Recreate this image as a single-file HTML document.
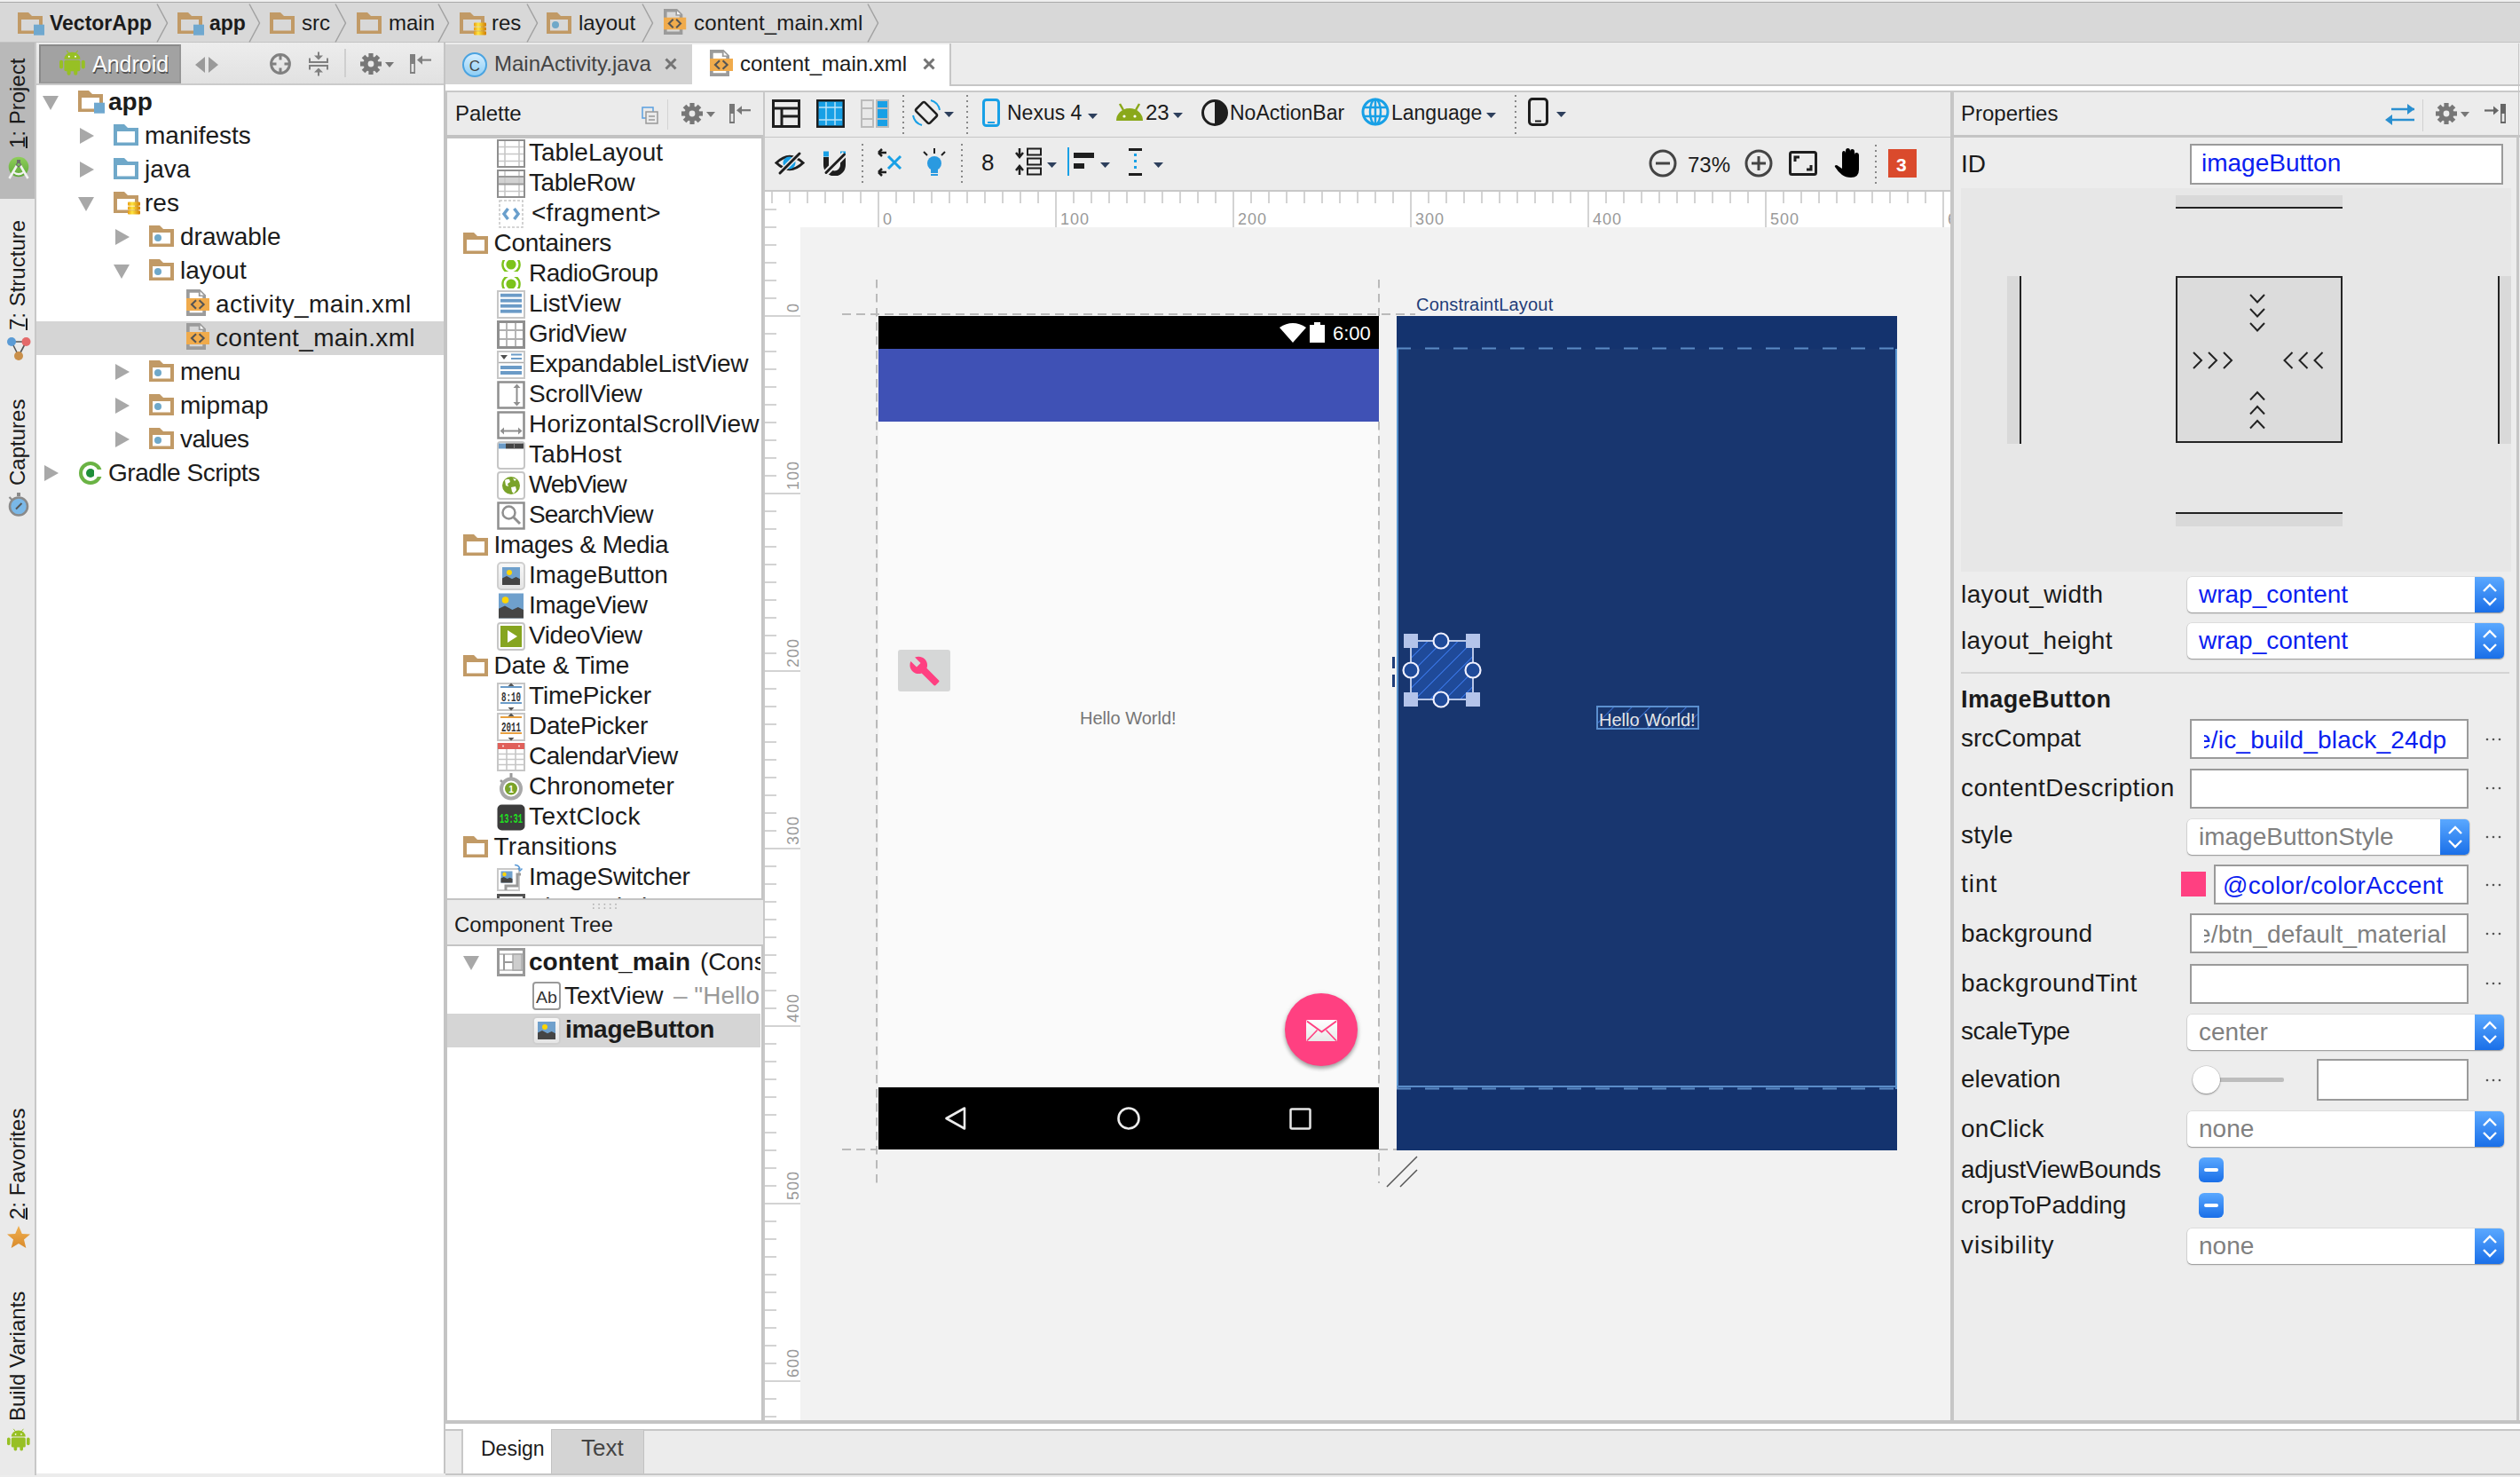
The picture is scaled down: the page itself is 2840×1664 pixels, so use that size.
<!DOCTYPE html>
<html><head><meta charset="utf-8"><title>Android Studio</title><style>
*{margin:0;padding:0;box-sizing:border-box}
html,body{width:2840px;height:1664px;overflow:hidden}
body{position:relative;background:#ececec;font-family:"Liberation Sans",sans-serif;color:#1b1b1b}
.a{position:absolute}
.t{position:absolute;white-space:nowrap;line-height:1}
.clip{position:absolute;overflow:hidden}
</style></head><body>

<div class="a" style="left:0px;top:0px;width:2840px;height:2px;background:#efefef;"></div>
<div class="a" style="left:0px;top:2px;width:2840px;height:1px;background:#a9a9a9;"></div>
<div class="a" style="left:0px;top:3px;width:2840px;height:44px;background:#d8d8d8;"></div>
<div class="a" style="left:0px;top:47px;width:2840px;height:2px;background:#c3c3c3;"></div>
<svg class="a" style="left:20px;top:14px;" width="30" height="26" viewBox="0 0 30 26"><path fill-rule="evenodd" d="M0 0 H12 L16 4 H28 V24 H0 Z M4 8 V20.4 H24 V8 Z" fill="#c19a66"/><rect x="18" y="13.7" width="12" height="12" fill="#6fa8cf"/></svg>
<div class="t" style="left:56px;top:14.5px;font-size:23px;color:#1b1b1b;font-weight:bold;">VectorApp</div>
<svg class="a" style="left:176px;top:4px;" width="15" height="44" viewBox="0 0 15 44"><path d="M1 0.5 L12.5 22 L1 43.5" fill="none" stroke="#a2a2a2" stroke-width="1.5"/></svg>
<svg class="a" style="left:200px;top:14px;" width="30" height="26" viewBox="0 0 30 26"><path fill-rule="evenodd" d="M0 0 H12 L16 4 H28 V24 H0 Z M4 8 V20.4 H24 V8 Z" fill="#c19a66"/><rect x="18" y="13.7" width="12" height="12" fill="#6fa8cf"/></svg>
<div class="t" style="left:236px;top:14.5px;font-size:23px;color:#1b1b1b;font-weight:bold;">app</div>
<svg class="a" style="left:280px;top:4px;" width="15" height="44" viewBox="0 0 15 44"><path d="M1 0.5 L12.5 22 L1 43.5" fill="none" stroke="#a2a2a2" stroke-width="1.5"/></svg>
<svg class="a" style="left:304px;top:14px;" width="30" height="26" viewBox="0 0 30 26"><path fill-rule="evenodd" d="M0 0 H12 L16 4 H28 V24 H0 Z M4 8 V20.4 H24 V8 Z" fill="#c19a66"/></svg>
<div class="t" style="left:340px;top:13.7px;font-size:24px;color:#1b1b1b;">src</div>
<svg class="a" style="left:377px;top:4px;" width="15" height="44" viewBox="0 0 15 44"><path d="M1 0.5 L12.5 22 L1 43.5" fill="none" stroke="#a2a2a2" stroke-width="1.5"/></svg>
<svg class="a" style="left:402px;top:14px;" width="30" height="26" viewBox="0 0 30 26"><path fill-rule="evenodd" d="M0 0 H12 L16 4 H28 V24 H0 Z M4 8 V20.4 H24 V8 Z" fill="#c19a66"/></svg>
<div class="t" style="left:438px;top:13.7px;font-size:24px;color:#1b1b1b;">main</div>
<svg class="a" style="left:493px;top:4px;" width="15" height="44" viewBox="0 0 15 44"><path d="M1 0.5 L12.5 22 L1 43.5" fill="none" stroke="#a2a2a2" stroke-width="1.5"/></svg>
<svg class="a" style="left:518px;top:14px;" width="30" height="26" viewBox="0 0 30 26"><path fill-rule="evenodd" d="M0 0 H12 L16 4 H28 V24 H0 Z M4 8 V20.4 H24 V8 Z" fill="#c19a66"/><defs><linearGradient id="coin" x1="0" x2="1"><stop offset="0" stop-color="#e89a10"/><stop offset="0.35" stop-color="#ffe640"/><stop offset="1" stop-color="#d07a00"/></linearGradient></defs><g fill="url(#coin)"><rect x="16" y="11.6" width="14" height="4.2" rx="1"/><rect x="16" y="16.4" width="14" height="4.2" rx="1"/><rect x="16" y="21.2" width="14" height="4.3" rx="1"/></g></svg>
<div class="t" style="left:554px;top:13.7px;font-size:24px;color:#1b1b1b;">res</div>
<svg class="a" style="left:593px;top:4px;" width="15" height="44" viewBox="0 0 15 44"><path d="M1 0.5 L12.5 22 L1 43.5" fill="none" stroke="#a2a2a2" stroke-width="1.5"/></svg>
<svg class="a" style="left:616px;top:14px;" width="30" height="26" viewBox="0 0 30 26"><path fill-rule="evenodd" d="M0 0 H12 L16 4 H28 V24 H0 Z M4 8 V20.4 H24 V8 Z" fill="#c19a66"/><circle cx="10" cy="14" r="4" fill="#6fa8c9"/></svg>
<div class="t" style="left:652px;top:13.7px;font-size:24px;color:#1b1b1b;">layout</div>
<svg class="a" style="left:723px;top:4px;" width="15" height="44" viewBox="0 0 15 44"><path d="M1 0.5 L12.5 22 L1 43.5" fill="none" stroke="#a2a2a2" stroke-width="1.5"/></svg>
<svg class="a" style="left:748px;top:10px;" width="27" height="31" viewBox="0 0 27 31"><g transform="scale(0.97)"><path fill-rule="evenodd" d="M0 0 H15.5 L22 6.5 V30 H0 Z M3.7 3.7 V26.3 H18.3 V8 H13.8 V3.7 Z" fill="#9b9b9b"/><path d="M15.6 2.6 L19.6 6.4 H15.6 Z" fill="#fff"/><rect x="0" y="10" width="26" height="14" fill="#f0ab4c"/><path d="M11 12.2 L6 17 L11 21.8 M14.6 12.2 L19.6 17 L14.6 21.8" fill="none" stroke="#555" stroke-width="2.1"/></g></svg>
<div class="t" style="left:782px;top:13.7px;font-size:24px;color:#1b1b1b;letter-spacing:0.15px;">content_main.xml</div>
<svg class="a" style="left:977px;top:4px;" width="15" height="44" viewBox="0 0 15 44"><path d="M1 0.5 L12.5 22 L1 43.5" fill="none" stroke="#a2a2a2" stroke-width="1.5"/></svg>
<div class="a" style="left:0px;top:48px;width:40px;height:1616px;background:#eaeaea;"></div>
<div class="a" style="left:39px;top:48px;width:2px;height:1616px;background:#c8c8c8;"></div>
<div class="a" style="left:0px;top:48px;width:39px;height:176px;background:#b9b9b9;"></div>
<div class="t" style="left:20px;top:167px;font-size:24px;color:#1b1b1b;transform-origin:0 0;transform:rotate(-90deg) translate(0,-0.5em);"><span style="text-decoration:underline;text-underline-offset:1px">1</span>: Project</div>
<div class="t" style="left:20px;top:372px;font-size:24px;color:#1b1b1b;transform-origin:0 0;transform:rotate(-90deg) translate(0,-0.5em);"><span style="text-decoration:underline;text-underline-offset:1px">7</span>: Structure</div>
<div class="t" style="left:20px;top:547px;font-size:24px;color:#1b1b1b;transform-origin:0 0;transform:rotate(-90deg) translate(0,-0.5em);">Captures</div>
<div class="t" style="left:20px;top:1374px;font-size:24px;color:#1b1b1b;transform-origin:0 0;transform:rotate(-90deg) translate(0,-0.5em);"><span style="text-decoration:underline;text-underline-offset:1px">2</span>: Favorites</div>
<div class="t" style="left:20px;top:1601px;font-size:24px;color:#1b1b1b;transform-origin:0 0;transform:rotate(-90deg) translate(0,-0.5em);">Build Variants</div>
<svg class="a" style="left:9px;top:176px;" width="26" height="26" viewBox="0 0 26 26"><defs><linearGradient id="asg" x1="0" y1="0" x2="0" y2="1"><stop offset="0" stop-color="#8fcf5a"/><stop offset="1" stop-color="#5fa83a"/></linearGradient></defs><circle cx="12" cy="12" r="11.3" fill="url(#asg)"/><path d="M1.5 25 L10 10.5 M22.5 25 L14 10.5" stroke="#f2f2f2" stroke-width="2.6"/><path d="M5.5 17.5 Q12 23 18.5 17.5" stroke="#f2f2f2" stroke-width="2.2" fill="none"/><path d="M10 4 H14 V7.5 L15.5 9.5 L12 13 L8.5 9.5 L10 7.5 Z" fill="#6d6d6d"/><circle cx="12" cy="9.3" r="1.6" fill="#78c257"/></svg>
<svg class="a" style="left:6px;top:378px;" width="30" height="30" viewBox="0 0 30 30"><path d="M7 7 H23.5 M7 7 L15 23 M23.5 7 L15 23" stroke="#555" stroke-width="1.6" fill="none"/><circle cx="7" cy="7" r="5" fill="#5b9bd5"/><circle cx="23.5" cy="7" r="5" fill="#e46a6a"/><circle cx="15" cy="23" r="5" fill="#c98f4a"/></svg>
<svg class="a" style="left:8px;top:555px;" width="26" height="28" viewBox="0 0 26 28"><rect x="11" y="0" width="4" height="4" fill="#8a8a8a"/><path d="M2.5 5 L6 8.5" stroke="#8a8a8a" stroke-width="2.2"/><circle cx="13" cy="15.5" r="10" fill="#7ab8e8" stroke="#8a8a8a" stroke-width="2.6"/><path d="M10 18.5 L16.5 12" stroke="#555" stroke-width="2"/></svg>
<svg class="a" style="left:7px;top:1380px;" width="28" height="28" viewBox="0 0 28 28"><defs><linearGradient id="stg" x1="0" y1="0" x2="0" y2="1"><stop offset="0" stop-color="#f0b050"/><stop offset="1" stop-color="#d98a2a"/></linearGradient></defs><path d="M14 1 L17.8 10 L27 10.5 L20 16.6 L22.3 26 L14 21 L5.7 26 L8 16.6 L1 10.5 L10.2 10 Z" fill="url(#stg)"/></svg>
<svg class="a" style="left:8px;top:1609px;" width="26" height="27" viewBox="0 0 26 27"><g transform="scale(0.8)" fill="#97c024"><path d="M6 12 a10 9 0 0 1 20 0 z"/><rect x="6" y="13" width="20" height="14" rx="2"/><rect x="0" y="13" width="4.5" height="11" rx="2.2"/><rect x="27.5" y="13" width="4.5" height="11" rx="2.2"/><rect x="9.5" y="24" width="4.5" height="8" rx="2.2"/><rect x="18" y="24" width="4.5" height="8" rx="2.2"/><path d="M9 1 l3 4 M23 1 l-3 4" stroke="#97c024" stroke-width="1.2"/></g><g transform="scale(0.8)" fill="#fff"><circle cx="12" cy="8.5" r="1.1"/><circle cx="20" cy="8.5" r="1.1"/></g></svg>
<div class="a" style="left:41px;top:48px;width:460px;height:1612px;background:#ffffff;"></div>
<div class="a" style="left:41px;top:48px;width:460px;height:47px;background:linear-gradient(#ededed,#e1e1e1);"></div>
<div class="a" style="left:41px;top:94px;width:460px;height:2px;background:#cbcbcb;"></div>
<div class="a" style="left:500px;top:48px;width:2px;height:1612px;background:#c4c4c4;"></div>
<div class="a" style="left:44px;top:50px;width:160px;height:44px;background:#a2a2a2;border:2px solid #8a8a8a;border-bottom-color:#9a9a9a;border-right-color:#959595;"></div>
<svg class="a" style="left:67px;top:56px;" width="29" height="30" viewBox="0 0 29 30"><g transform="scale(0.9)" fill="#97c024"><path d="M6 12 a10 9 0 0 1 20 0 z"/><rect x="6" y="13" width="20" height="14" rx="2"/><rect x="0" y="13" width="4.5" height="11" rx="2.2"/><rect x="27.5" y="13" width="4.5" height="11" rx="2.2"/><rect x="9.5" y="24" width="4.5" height="8" rx="2.2"/><rect x="18" y="24" width="4.5" height="8" rx="2.2"/><path d="M9 1 l3 4 M23 1 l-3 4" stroke="#97c024" stroke-width="1.2"/></g><g transform="scale(0.9)" fill="#fff"><circle cx="12" cy="8.5" r="1.1"/><circle cx="20" cy="8.5" r="1.1"/></g></svg>
<div class="t" style="left:104px;top:59.8px;font-size:25px;color:#ffffff;text-shadow:1px 1.5px 0.5px #505050;">Android</div>
<svg class="a" style="left:220px;top:64px;" width="26" height="20" viewBox="0 0 26 20"><path d="M11 0 V18 L0 9 Z M15 0 V18 L26 9 Z" fill="#9a9a9a"/></svg>
<svg class="a" style="left:302px;top:58px;" width="28" height="28" viewBox="0 0 28 28"><circle cx="14" cy="14" r="10.4" fill="none" stroke="#808080" stroke-width="3"/><path d="M14 3 V9.5 M14 18.5 V25 M3 14 H9.5 M18.5 14 H25" stroke="#808080" stroke-width="3"/></svg>
<svg class="a" style="left:347px;top:58px;" width="24" height="28" viewBox="0 0 24 28"><g fill="#808080"><rect x="1" y="11" width="22" height="2"/><rect x="1" y="15" width="22" height="2"/><rect x="1" y="7.5" width="2" height="5.5"/><rect x="21" y="7.5" width="2" height="5.5"/><rect x="1" y="15" width="2" height="5.5"/><rect x="21" y="15" width="2" height="5.5"/><rect x="11" y="0.5" width="2" height="5"/><path d="M7 4.5 H17 L12 9.5 Z"/><rect x="11" y="22.5" width="2" height="5"/><path d="M7 23.5 H17 L12 18.5 Z"/></g></svg>
<div class="a" style="left:388px;top:55px;width:2px;height:32px;background:#cfcfcf;"></div>
<svg class="a" style="left:405px;top:59px;" width="40" height="26" viewBox="0 0 40 26"><g transform="translate(13 13)" fill="#777777"><rect x="-2.6" y="-12" width="5.2" height="6" transform="rotate(0)"/><rect x="-2.6" y="-12" width="5.2" height="6" transform="rotate(45)"/><rect x="-2.6" y="-12" width="5.2" height="6" transform="rotate(90)"/><rect x="-2.6" y="-12" width="5.2" height="6" transform="rotate(135)"/><rect x="-2.6" y="-12" width="5.2" height="6" transform="rotate(180)"/><rect x="-2.6" y="-12" width="5.2" height="6" transform="rotate(225)"/><rect x="-2.6" y="-12" width="5.2" height="6" transform="rotate(270)"/><rect x="-2.6" y="-12" width="5.2" height="6" transform="rotate(315)"/><circle r="8.6"/><circle r="3.4" fill="#e9e9e9"/></g><path d="M29 11 H39 L34 17 Z" fill="#777777"/></svg>
<svg class="a" style="left:461px;top:60px;" width="28" height="24" viewBox="0 0 28 24"><rect x="1" y="1" width="6" height="22" fill="#808080"/><rect x="2.6" y="12" width="2.8" height="9" fill="#e6e6e6"/><path d="M15 7.6 H25" stroke="#808080" stroke-width="2.2"/><path d="M9 7.6 L15 2.5 V12.7 Z" fill="#808080"/></svg>
<div class="a" style="left:41px;top:362px;width:459px;height:38px;background:#d5d5d5;"></div>
<svg class="a" style="left:48px;top:108.0px;" width="18" height="16" viewBox="0 0 18 16"><path d="M0 0 H18 L9 16 z" fill="#a8a8a8"/></svg>
<svg class="a" style="left:88px;top:102.2px;" width="30" height="26" viewBox="0 0 30 26"><path fill-rule="evenodd" d="M0 0 H12 L16 4 H28 V24 H0 Z M4 8 V20.4 H24 V8 Z" fill="#c19a66"/><rect x="18" y="13.7" width="12" height="12" fill="#6fa8cf"/></svg>
<div class="t" style="left:122px;top:100.5px;font-size:28px;color:#1b1b1b;font-weight:bold;">app</div>
<svg class="a" style="left:90px;top:144.0px;" width="16" height="18" viewBox="0 0 16 18"><path d="M0 0 V18 L16 9 z" fill="#a8a8a8"/></svg>
<svg class="a" style="left:128px;top:140.2px;" width="30" height="26" viewBox="0 0 30 26"><path fill-rule="evenodd" d="M0 0 H12 L16 4 H28 V24 H0 Z M4 8 V20.4 H24 V8 Z" fill="#6fa8c9"/></svg>
<div class="t" style="left:163px;top:138.5px;font-size:28px;color:#1b1b1b;">manifests</div>
<svg class="a" style="left:90px;top:182.0px;" width="16" height="18" viewBox="0 0 16 18"><path d="M0 0 V18 L16 9 z" fill="#a8a8a8"/></svg>
<svg class="a" style="left:128px;top:178.2px;" width="30" height="26" viewBox="0 0 30 26"><path fill-rule="evenodd" d="M0 0 H12 L16 4 H28 V24 H0 Z M4 8 V20.4 H24 V8 Z" fill="#6fa8c9"/></svg>
<div class="t" style="left:163px;top:176.5px;font-size:28px;color:#1b1b1b;">java</div>
<svg class="a" style="left:88px;top:222.0px;" width="18" height="16" viewBox="0 0 18 16"><path d="M0 0 H18 L9 16 z" fill="#a8a8a8"/></svg>
<svg class="a" style="left:128px;top:216.2px;" width="30" height="26" viewBox="0 0 30 26"><path fill-rule="evenodd" d="M0 0 H12 L16 4 H28 V24 H0 Z M4 8 V20.4 H24 V8 Z" fill="#c19a66"/><defs><linearGradient id="coin" x1="0" x2="1"><stop offset="0" stop-color="#e89a10"/><stop offset="0.35" stop-color="#ffe640"/><stop offset="1" stop-color="#d07a00"/></linearGradient></defs><g fill="url(#coin)"><rect x="16" y="11.6" width="14" height="4.2" rx="1"/><rect x="16" y="16.4" width="14" height="4.2" rx="1"/><rect x="16" y="21.2" width="14" height="4.3" rx="1"/></g></svg>
<div class="t" style="left:163px;top:214.5px;font-size:28px;color:#1b1b1b;">res</div>
<svg class="a" style="left:130px;top:258.0px;" width="16" height="18" viewBox="0 0 16 18"><path d="M0 0 V18 L16 9 z" fill="#a8a8a8"/></svg>
<svg class="a" style="left:168px;top:254.2px;" width="30" height="26" viewBox="0 0 30 26"><path fill-rule="evenodd" d="M0 0 H12 L16 4 H28 V24 H0 Z M4 8 V20.4 H24 V8 Z" fill="#c19a66"/><circle cx="10" cy="14" r="4" fill="#6fa8c9"/></svg>
<div class="t" style="left:203px;top:252.5px;font-size:28px;color:#1b1b1b;">drawable</div>
<svg class="a" style="left:128px;top:298.0px;" width="18" height="16" viewBox="0 0 18 16"><path d="M0 0 H18 L9 16 z" fill="#a8a8a8"/></svg>
<svg class="a" style="left:168px;top:292.2px;" width="30" height="26" viewBox="0 0 30 26"><path fill-rule="evenodd" d="M0 0 H12 L16 4 H28 V24 H0 Z M4 8 V20.4 H24 V8 Z" fill="#c19a66"/><circle cx="10" cy="14" r="4" fill="#6fa8c9"/></svg>
<div class="t" style="left:203px;top:290.5px;font-size:28px;color:#1b1b1b;">layout</div>
<svg class="a" style="left:210px;top:326.2px;" width="27" height="31" viewBox="0 0 27 31"><g transform="scale(1.0)"><path fill-rule="evenodd" d="M0 0 H15.5 L22 6.5 V30 H0 Z M3.7 3.7 V26.3 H18.3 V8 H13.8 V3.7 Z" fill="#9b9b9b"/><path d="M15.6 2.6 L19.6 6.4 H15.6 Z" fill="#fff"/><rect x="0" y="10" width="26" height="14" fill="#f0ab4c"/><path d="M11 12.2 L6 17 L11 21.8 M14.6 12.2 L19.6 17 L14.6 21.8" fill="none" stroke="#555" stroke-width="2.1"/></g></svg>
<div class="t" style="left:243px;top:328.5px;font-size:28px;color:#1b1b1b;letter-spacing:0.44px;">activity_main.xml</div>
<svg class="a" style="left:210px;top:364.2px;" width="27" height="31" viewBox="0 0 27 31"><g transform="scale(1.0)"><path fill-rule="evenodd" d="M0 0 H15.5 L22 6.5 V30 H0 Z M3.7 3.7 V26.3 H18.3 V8 H13.8 V3.7 Z" fill="#9b9b9b"/><path d="M15.6 2.6 L19.6 6.4 H15.6 Z" fill="#fff"/><rect x="0" y="10" width="26" height="14" fill="#f0ab4c"/><path d="M11 12.2 L6 17 L11 21.8 M14.6 12.2 L19.6 17 L14.6 21.8" fill="none" stroke="#555" stroke-width="2.1"/></g></svg>
<div class="t" style="left:243px;top:366.5px;font-size:28px;color:#1b1b1b;letter-spacing:0.34px;">content_main.xml</div>
<svg class="a" style="left:130px;top:410.0px;" width="16" height="18" viewBox="0 0 16 18"><path d="M0 0 V18 L16 9 z" fill="#a8a8a8"/></svg>
<svg class="a" style="left:168px;top:406.2px;" width="30" height="26" viewBox="0 0 30 26"><path fill-rule="evenodd" d="M0 0 H12 L16 4 H28 V24 H0 Z M4 8 V20.4 H24 V8 Z" fill="#c19a66"/><circle cx="10" cy="14" r="4" fill="#6fa8c9"/></svg>
<div class="t" style="left:203px;top:404.5px;font-size:28px;color:#1b1b1b;letter-spacing:-0.6px;">menu</div>
<svg class="a" style="left:130px;top:448.0px;" width="16" height="18" viewBox="0 0 16 18"><path d="M0 0 V18 L16 9 z" fill="#a8a8a8"/></svg>
<svg class="a" style="left:168px;top:444.2px;" width="30" height="26" viewBox="0 0 30 26"><path fill-rule="evenodd" d="M0 0 H12 L16 4 H28 V24 H0 Z M4 8 V20.4 H24 V8 Z" fill="#c19a66"/><circle cx="10" cy="14" r="4" fill="#6fa8c9"/></svg>
<div class="t" style="left:203px;top:442.5px;font-size:28px;color:#1b1b1b;">mipmap</div>
<svg class="a" style="left:130px;top:486.0px;" width="16" height="18" viewBox="0 0 16 18"><path d="M0 0 V18 L16 9 z" fill="#a8a8a8"/></svg>
<svg class="a" style="left:168px;top:482.2px;" width="30" height="26" viewBox="0 0 30 26"><path fill-rule="evenodd" d="M0 0 H12 L16 4 H28 V24 H0 Z M4 8 V20.4 H24 V8 Z" fill="#c19a66"/><circle cx="10" cy="14" r="4" fill="#6fa8c9"/></svg>
<div class="t" style="left:203px;top:480.5px;font-size:28px;color:#1b1b1b;letter-spacing:-0.6px;">values</div>
<svg class="a" style="left:50px;top:524.0px;" width="16" height="18" viewBox="0 0 16 18"><path d="M0 0 V18 L16 9 z" fill="#a8a8a8"/></svg>
<svg class="a" style="left:88px;top:519.2px;" width="30" height="28" viewBox="0 0 30 28"><circle cx="14" cy="14" r="11" fill="none" stroke="#6ab344" stroke-width="4"/><circle cx="14" cy="14" r="5" fill="#1f8f3a"/><rect x="18" y="10" width="12" height="8" fill="#fff"/></svg>
<div class="t" style="left:122px;top:518.5px;font-size:28px;color:#1b1b1b;letter-spacing:-0.48px;">Gradle Scripts</div>
<div class="a" style="left:502px;top:48px;width:2338px;height:49px;background:#ececec;"></div>
<div class="a" style="left:502px;top:50px;width:278px;height:45px;background:#d3d3d3;"></div>
<div class="a" style="left:780px;top:50px;width:290px;height:47px;background:#ffffff;"></div>
<div class="a" style="left:502px;top:95px;width:2338px;height:7px;background:#ffffff;"></div>
<div class="a" style="left:1070px;top:95px;width:1770px;height:2px;background:#c6c6c6;"></div>
<div class="a" style="left:1070px;top:49px;width:2px;height:48px;background:#c6c6c6;"></div>
<div class="a" style="left:2838px;top:49px;width:1px;height:53px;background:#c6c6c6;"></div>
<div class="a" style="left:502px;top:102px;width:2338px;height:2px;background:#c9c9c9;"></div>
<svg class="a" style="left:520px;top:58px;" width="30" height="30" viewBox="0 0 30 30"><defs><linearGradient id="cg" x1="0" y1="0" x2="0" y2="1"><stop offset="0" stop-color="#d8efff"/><stop offset="1" stop-color="#8ccdf5"/></linearGradient></defs><circle cx="15" cy="15" r="13" fill="url(#cg)" stroke="#4aa3e0" stroke-width="2"/><text x="15" y="21.5" font-family="Liberation Sans" font-size="17" text-anchor="middle" fill="#444">C</text></svg>
<div class="t" style="left:557px;top:59.7px;font-size:24px;color:#444444;">MainActivity.java</div>
<svg class="a" style="left:749px;top:65px;" width="14" height="14" viewBox="0 0 14 14"><path d="M1.5 1.5 L12.5 12.5 M12.5 1.5 L1.5 12.5" stroke="#747474" stroke-width="3"/></svg>
<svg class="a" style="left:800px;top:56px;" width="27" height="31" viewBox="0 0 27 31"><g transform="scale(1.0)"><path fill-rule="evenodd" d="M0 0 H15.5 L22 6.5 V30 H0 Z M3.7 3.7 V26.3 H18.3 V8 H13.8 V3.7 Z" fill="#9b9b9b"/><path d="M15.6 2.6 L19.6 6.4 H15.6 Z" fill="#fff"/><rect x="0" y="10" width="26" height="14" fill="#f0ab4c"/><path d="M11 12.2 L6 17 L11 21.8 M14.6 12.2 L19.6 17 L14.6 21.8" fill="none" stroke="#555" stroke-width="2.1"/></g></svg>
<div class="t" style="left:834px;top:59.7px;font-size:24px;color:#1b1b1b;">content_main.xml</div>
<svg class="a" style="left:1040px;top:65px;" width="14" height="14" viewBox="0 0 14 14"><path d="M1.5 1.5 L12.5 12.5 M12.5 1.5 L1.5 12.5" stroke="#747474" stroke-width="3"/></svg>
<div class="a" style="left:502px;top:104px;width:358px;height:1506px;background:#ffffff;"></div>
<div class="a" style="left:500px;top:104px;width:4px;height:1500px;background:#c4c4c4;"></div>
<div class="a" style="left:504px;top:104px;width:356px;height:48px;background:#ebebeb;"></div>
<div class="a" style="left:502px;top:152px;width:358px;height:4px;background:#c2c2c2;"></div>
<div class="a" style="left:860px;top:104px;width:2px;height:48px;background:#c4c4c4;"></div>
<div class="a" style="left:858px;top:152px;width:4px;height:860px;background:#c4c4c4;"></div>
<div class="a" style="left:858px;top:1066px;width:4px;height:538px;background:#c4c4c4;"></div>
<div class="t" style="left:513px;top:115.7px;font-size:24px;color:#1b1b1b;">Palette</div>
<svg class="a" style="left:723px;top:120px;" width="20" height="20" viewBox="0 0 20 20"><rect x="1" y="1" width="12" height="12" fill="none" stroke="#5aa0e0" stroke-width="1.5"/><rect x="5" y="6" width="13" height="13" fill="#ebebeb" stroke="#999" stroke-width="1.5"/><path d="M8 11 H15 M8 15 H15" stroke="#999" stroke-width="1.5"/></svg>
<div class="a" style="left:752px;top:112px;width:1px;height:34px;background:#d3d3d3;"></div>
<svg class="a" style="left:767px;top:115px;" width="40" height="26" viewBox="0 0 40 26"><g transform="translate(13 13)" fill="#777777"><rect x="-2.6" y="-12" width="5.2" height="6" transform="rotate(0)"/><rect x="-2.6" y="-12" width="5.2" height="6" transform="rotate(45)"/><rect x="-2.6" y="-12" width="5.2" height="6" transform="rotate(90)"/><rect x="-2.6" y="-12" width="5.2" height="6" transform="rotate(135)"/><rect x="-2.6" y="-12" width="5.2" height="6" transform="rotate(180)"/><rect x="-2.6" y="-12" width="5.2" height="6" transform="rotate(225)"/><rect x="-2.6" y="-12" width="5.2" height="6" transform="rotate(270)"/><rect x="-2.6" y="-12" width="5.2" height="6" transform="rotate(315)"/><circle r="8.6"/><circle r="3.4" fill="#ebebeb"/></g><path d="M29 11 H39 L34 17 Z" fill="#777777"/></svg>
<svg class="a" style="left:821px;top:116px;" width="28" height="24" viewBox="0 0 28 24"><rect x="1" y="1" width="6" height="22" fill="#777"/><rect x="2.6" y="12" width="2.8" height="9" fill="#ebebeb"/><path d="M15 8.2 H25" stroke="#777" stroke-width="2.2"/><path d="M9 8.2 L15 3.2 V13.2 Z" fill="#777"/></svg>
<div class="clip" style="left:504px;top:156px;width:353px;height:856px;">
<svg class="a" style="left:56px;top:0.5px;" width="32" height="32" viewBox="0 0 32 32"><rect x="1" y="1" width="30" height="30" fill="#fff" stroke="#8f8f8f" stroke-width="2"/><path d="M9 2 V30 M25 2 V30 M2 8.5 H30 M2 16.5 H30 M2 24.5 H30" stroke="#c6c6c6" stroke-width="1.6"/></svg>
<div class="t" style="left:92px;top:2.0px;font-size:28px;color:#1b1b1b;">TableLayout</div>
<svg class="a" style="left:56px;top:34.5px;" width="32" height="32" viewBox="0 0 32 32"><rect x="1" y="1" width="30" height="30" fill="#fff" stroke="#8f8f8f" stroke-width="2"/><rect x="2" y="8" width="28" height="8.5" fill="#d2d2d2"/><path d="M9 2 V30 M25 2 V30 M2 24.5 H30" stroke="#c6c6c6" stroke-width="1.6"/><path d="M2 8 H30 M2 16.5 H30" stroke="#9a9a9a" stroke-width="2"/></svg>
<div class="t" style="left:92px;top:36.0px;font-size:28px;color:#1b1b1b;letter-spacing:-0.45px;">TableRow</div>
<svg class="a" style="left:56px;top:68.5px;" width="32" height="32" viewBox="0 0 32 32"><rect x="3" y="1" width="26" height="30" fill="#fff" stroke="#c8c8c8" stroke-width="1.6" stroke-dasharray="3 2"/><path d="M12.5 10 L8 16 L12.5 22 M19.5 10 L24 16 L19.5 22" stroke="#6a9fcc" stroke-width="3.5" fill="none"/></svg>
<div class="t" style="left:95px;top:70.0px;font-size:28px;color:#1b1b1b;letter-spacing:0.27px;">&lt;fragment&gt;</div>
<svg class="a" style="left:18px;top:105.7px" width="28" height="24" viewBox="0 0 28 24"><path fill-rule="evenodd" d="M0 0 H12 L16 4 H28 V24 H0 Z M4 8 V20.4 H24 V8 Z" fill="#c19a66"/></svg>
<div class="t" style="left:52.5px;top:104.0px;font-size:28px;color:#1b1b1b;letter-spacing:-0.29px;">Containers</div>
<svg class="a" style="left:56px;top:136.5px;" width="32" height="32" viewBox="0 0 32 32"><defs><clipPath id="rgc"><rect x="0" y="0" width="32" height="32"/></clipPath></defs><g clip-path="url(#rgc)"><g fill="#7cc31b"><circle cx="16" cy="5" r="5.6"/><circle cx="16" cy="27" r="5.6"/></g><g fill="none" stroke="#7cc31b" stroke-width="2.4"><circle cx="16" cy="5" r="9.6"/><circle cx="16" cy="27" r="9.6"/></g><rect x="0" y="13" width="32" height="6" fill="#fff"/></g></svg>
<div class="t" style="left:92px;top:138.0px;font-size:28px;color:#1b1b1b;letter-spacing:-0.54px;">RadioGroup</div>
<svg class="a" style="left:56px;top:170.5px;" width="32" height="32" viewBox="0 0 32 32"><rect x="1" y="1" width="30" height="30" fill="#fff" stroke="#c6c6c6" stroke-width="2"/><g fill="#6b9bc7"><rect x="4" y="3.8" width="24" height="3.8"/><rect x="4" y="9.8" width="24" height="3.8"/><rect x="4" y="15.8" width="24" height="3.8"/><rect x="4" y="21.8" width="24" height="3.8"/></g></svg>
<div class="t" style="left:92px;top:172.0px;font-size:28px;color:#1b1b1b;">ListView</div>
<svg class="a" style="left:56px;top:204.5px;" width="32" height="32" viewBox="0 0 32 32"><rect x="1.5" y="1.5" width="29" height="29" fill="#fff" stroke="#8f8f8f" stroke-width="3"/><path d="M11 3 V29 M21 3 V29 M3 11 H29 M3 21 H29" stroke="#b0b0b0" stroke-width="1.8"/></svg>
<div class="t" style="left:92px;top:206.0px;font-size:28px;color:#1b1b1b;letter-spacing:-0.45px;">GridView</div>
<svg class="a" style="left:56px;top:238.5px;" width="32" height="32" viewBox="0 0 32 32"><rect x="1" y="1" width="30" height="30" fill="#fff" stroke="#c6c6c6" stroke-width="2"/><path d="M4 5 H12 L8 10 Z" fill="#505050"/><path d="M16 4.5 H28 M16 9 H28" stroke="#6b9bc7" stroke-width="1.8"/><path d="M2 13.5 H30" stroke="#a8a8a8" stroke-width="1.5"/><rect x="4" y="17" width="24" height="4" fill="#6b9bc7"/><rect x="4" y="23" width="24" height="4" fill="#6b9bc7"/></svg>
<div class="t" style="left:92px;top:240.0px;font-size:28px;color:#1b1b1b;letter-spacing:-0.24px;">ExpandableListView</div>
<svg class="a" style="left:56px;top:272.5px;" width="32" height="32" viewBox="0 0 32 32"><rect x="1.5" y="1.5" width="29" height="29" fill="#fff" stroke="#8f8f8f" stroke-width="2.5"/><path d="M22.5 7 V25" stroke="#8f8f8f" stroke-width="2"/><path d="M18.5 8 L22.5 3.5 L26.5 8 Z M18.5 24 L22.5 28.5 L26.5 24 Z" fill="#8f8f8f"/></svg>
<div class="t" style="left:92px;top:274.0px;font-size:28px;color:#1b1b1b;letter-spacing:-0.27px;">ScrollView</div>
<svg class="a" style="left:56px;top:306.5px;" width="32" height="32" viewBox="0 0 32 32"><rect x="1.5" y="1.5" width="29" height="29" fill="#fff" stroke="#8f8f8f" stroke-width="2.5"/><path d="M7 22.5 H25" stroke="#8f8f8f" stroke-width="2"/><path d="M8 18.5 L3.5 22.5 L8 26.5 Z M24 18.5 L28.5 22.5 L24 26.5 Z" fill="#8f8f8f"/></svg>
<div class="t" style="left:92px;top:308.0px;font-size:28px;color:#1b1b1b;letter-spacing:0.17px;">HorizontalScrollView</div>
<svg class="a" style="left:56px;top:340.5px;" width="32" height="32" viewBox="0 0 32 32"><rect x="1" y="1" width="30" height="30" rx="3" fill="#fff" stroke="#c6c6c6" stroke-width="2"/><rect x="2" y="2.5" width="8" height="6" fill="#6b9bc7"/><rect x="10" y="2.5" width="20" height="6" fill="#444"/><path d="M19.5 2.5 V8.5" stroke="#888" stroke-width="1"/></svg>
<div class="t" style="left:92px;top:342.0px;font-size:28px;color:#1b1b1b;letter-spacing:0.3px;">TabHost</div>
<svg class="a" style="left:56px;top:374.5px;" width="32" height="32" viewBox="0 0 32 32"><rect x="1" y="1" width="30" height="30" rx="3" fill="#fff" stroke="#c6c6c6" stroke-width="2"/><circle cx="16" cy="16" r="10" fill="#7aa32a"/><path d="M9 10 Q12 8 14 9 L15 12 L12 14 L13 17 L10 16 Z M16 18 L21 17 L22 21 L19 25 L17 23 Z M18 8 L22 9 L20 11 Z" fill="#fff"/></svg>
<div class="t" style="left:92px;top:376.0px;font-size:28px;color:#1b1b1b;letter-spacing:-1.1px;">WebView</div>
<svg class="a" style="left:56px;top:408.5px;" width="32" height="32" viewBox="0 0 32 32"><rect x="1.5" y="1.5" width="29" height="29" fill="#fff" stroke="#8f8f8f" stroke-width="2.5"/><circle cx="13.5" cy="12.5" r="7" fill="none" stroke="#8f8f8f" stroke-width="2.5"/><path d="M18.5 17.5 L26 25" stroke="#8f8f8f" stroke-width="3"/></svg>
<div class="t" style="left:92px;top:410.0px;font-size:28px;color:#1b1b1b;letter-spacing:-0.95px;">SearchView</div>
<svg class="a" style="left:18px;top:445.7px" width="28" height="24" viewBox="0 0 28 24"><path fill-rule="evenodd" d="M0 0 H12 L16 4 H28 V24 H0 Z M4 8 V20.4 H24 V8 Z" fill="#c19a66"/></svg>
<div class="t" style="left:52.5px;top:444.0px;font-size:28px;color:#1b1b1b;letter-spacing:-0.41px;">Images &amp; Media</div>
<svg class="a" style="left:56px;top:476.5px;" width="32" height="32" viewBox="0 0 32 32"><defs><linearGradient id="ibg" x1="0" y1="0" x2="0" y2="1"><stop offset="0" stop-color="#f8f8f8"/><stop offset="1" stop-color="#e4e4e4"/></linearGradient></defs><rect x="1" y="1" width="30" height="30" rx="4" fill="url(#ibg)" stroke="#cfcfcf" stroke-width="2"/><rect x="6" y="6" width="20" height="20" fill="#6fa0cc"/><circle cx="14" cy="12" r="3" fill="#ffd500"/><path d="M6 26 V18.4 L11.0 16.0 L17.0 19.200000000000003 L21.6 17.0 L26 19.200000000000003 V26 Z" fill="#454545"/></svg>
<div class="t" style="left:92px;top:478.0px;font-size:28px;color:#1b1b1b;letter-spacing:-0.19px;">ImageButton</div>
<svg class="a" style="left:56px;top:510.5px;" width="32" height="32" viewBox="0 0 32 32"><rect x="2" y="1.5" width="28" height="28" fill="#6fa0cc"/><circle cx="9.5" cy="9.0" r="3.8" fill="#ffd500"/><path d="M2 29.5 V18.86 L9.0 15.5 L17.400000000000002 19.98 L23.84 16.900000000000002 L30 19.98 V29.5 Z" fill="#454545"/></svg>
<div class="t" style="left:92px;top:512.0px;font-size:28px;color:#1b1b1b;letter-spacing:-0.51px;">ImageView</div>
<svg class="a" style="left:56px;top:544.5px;" width="32" height="32" viewBox="0 0 32 32"><rect x="1" y="1" width="30" height="30" rx="3" fill="#fff" stroke="#c6c6c6" stroke-width="2"/><rect x="4" y="4" width="24" height="24" fill="#86a520"/><path d="M12 9 V23 L23 16 Z" fill="#fff"/></svg>
<div class="t" style="left:92px;top:546.0px;font-size:28px;color:#1b1b1b;letter-spacing:-0.42px;">VideoView</div>
<svg class="a" style="left:18px;top:581.7px" width="28" height="24" viewBox="0 0 28 24"><path fill-rule="evenodd" d="M0 0 H12 L16 4 H28 V24 H0 Z M4 8 V20.4 H24 V8 Z" fill="#c19a66"/></svg>
<div class="t" style="left:52.5px;top:580.0px;font-size:28px;color:#1b1b1b;letter-spacing:-0.12px;">Date &amp; Time</div>
<svg class="a" style="left:56px;top:612.5px;" width="32" height="32" viewBox="0 0 32 32"><rect x="1" y="1" width="30" height="30" fill="#fff" stroke="#c6c6c6" stroke-width="2"/><path d="M12.5 4 L16 0.5 L19.5 4 Z M12.5 28 L16 31.5 L19.5 28 Z" fill="#555"/><path d="M4 5 H28 M4 23 H28" stroke="#6b9bc7" stroke-width="1.8"/><text x="16" y="20.5" font-family="Liberation Mono" font-size="14" font-weight="bold" text-anchor="middle" fill="#333" textLength="22" lengthAdjust="spacingAndGlyphs">8:10</text></svg>
<div class="t" style="left:92px;top:614.0px;font-size:28px;color:#1b1b1b;letter-spacing:-0.11px;">TimePicker</div>
<svg class="a" style="left:56px;top:646.5px;" width="32" height="32" viewBox="0 0 32 32"><rect x="1" y="1" width="30" height="30" fill="#fff" stroke="#c6c6c6" stroke-width="2"/><path d="M12.5 4 L16 0.5 L19.5 4 Z M12.5 28 L16 31.5 L19.5 28 Z" fill="#555"/><path d="M4 5 H28 M4 23 H28" stroke="#e8a040" stroke-width="1.8"/><text x="16" y="20.5" font-family="Liberation Mono" font-size="14" font-weight="bold" text-anchor="middle" fill="#333" textLength="22" lengthAdjust="spacingAndGlyphs">2011</text></svg>
<div class="t" style="left:92px;top:648.0px;font-size:28px;color:#1b1b1b;letter-spacing:-0.29px;">DatePicker</div>
<svg class="a" style="left:56px;top:680.5px;" width="32" height="32" viewBox="0 0 32 32"><rect x="1" y="1" width="30" height="30" fill="#fff" stroke="#c6c6c6" stroke-width="2"/><rect x="1" y="0" width="30" height="7" fill="#e0605a"/><circle cx="7" cy="3.5" r="0.9" fill="#fff"/><circle cx="25" cy="3.5" r="0.9" fill="#fff"/><path d="M11 7 V30 M21 7 V30 M2 12.5 H30 M2 18.5 H30 M2 24.5 H30" stroke="#c6c6c6" stroke-width="1.6"/></svg>
<div class="t" style="left:92px;top:682.0px;font-size:28px;color:#1b1b1b;letter-spacing:-0.51px;">CalendarView</div>
<svg class="a" style="left:56px;top:714.5px;" width="32" height="32" viewBox="0 0 32 32"><rect x="14.5" y="0" width="3" height="5" fill="#999"/><path d="M4 8 L8 12" stroke="#999" stroke-width="2.5"/><circle cx="16" cy="17.5" r="11" fill="#fff" stroke="#a8a8a8" stroke-width="4"/><circle cx="16" cy="17.5" r="7" fill="#7aa32a"/><text x="16" y="21.5" font-family="Liberation Sans" font-size="10" font-weight="bold" text-anchor="middle" fill="#fff">1</text></svg>
<div class="t" style="left:92px;top:716.0px;font-size:28px;color:#1b1b1b;letter-spacing:0.04px;">Chronometer</div>
<svg class="a" style="left:56px;top:748.5px;" width="32" height="32" viewBox="0 0 32 32"><rect x="0.5" y="1.5" width="31" height="29" rx="5" fill="#3c3c3c"/><text x="16" y="22" font-family="Liberation Mono" font-size="15" font-weight="bold" text-anchor="middle" fill="#20e020" textLength="26" lengthAdjust="spacingAndGlyphs">13:31</text></svg>
<div class="t" style="left:92px;top:750.0px;font-size:28px;color:#1b1b1b;letter-spacing:0.52px;">TextClock</div>
<svg class="a" style="left:18px;top:785.7px" width="28" height="24" viewBox="0 0 28 24"><path fill-rule="evenodd" d="M0 0 H12 L16 4 H28 V24 H0 Z M4 8 V20.4 H24 V8 Z" fill="#c19a66"/></svg>
<div class="t" style="left:52.5px;top:784.0px;font-size:28px;color:#1b1b1b;letter-spacing:0.29px;">Transitions</div>
<svg class="a" style="left:56px;top:816.5px;" width="32" height="32" viewBox="0 0 32 32"><rect x="1" y="6" width="24" height="24" fill="#fff" stroke="#c8c8c8" stroke-width="2"/><path d="M10 30 V25 H23 V12 H27" fill="none" stroke="#9a9a9a" stroke-width="3"/><rect x="4.5" y="8.5" width="13" height="13" fill="#6fa0cc"/><circle cx="8.5" cy="12.0" r="2.2" fill="#ffd500"/><path d="M4.5 21.5 V16.560000000000002 L7.75 15.0 L11.65 17.08 L14.64 15.65 L17.5 17.08 V21.5 Z" fill="#454545"/><path d="M20 1.5 Q25 1.5 26 6 M24 5 L26 8 L28.5 5.5" stroke="#5b9ad6" stroke-width="1.6" fill="none"/></svg>
<div class="t" style="left:92px;top:818.0px;font-size:28px;color:#1b1b1b;letter-spacing:-0.27px;">ImageSwitcher</div>
<svg class="a" style="left:56px;top:850.5px;" width="32" height="32" viewBox="0 0 32 32"><rect x="1.5" y="1.5" width="29" height="29" fill="#fff" stroke="#555" stroke-width="3"/></svg>
<div class="t" style="left:92px;top:852.0px;font-size:28px;color:#1b1b1b;">ViewSwitcher</div>
</div>
<div class="a" style="left:504px;top:1013px;width:356px;height:51px;background:#ebebeb;"></div>
<div class="a" style="left:502px;top:1012px;width:358px;height:2px;background:#c4c4c4;"></div>
<svg class="a" style="left:666px;top:1016px;" width="32" height="9" viewBox="0 0 32 9"><rect x="2.0" y="2.0" width="1.6" height="1.6" fill="#b0b0b0"/><rect x="2.0" y="6.3" width="1.6" height="1.6" fill="#b0b0b0"/><rect x="8.3" y="2.0" width="1.6" height="1.6" fill="#b0b0b0"/><rect x="8.3" y="6.3" width="1.6" height="1.6" fill="#b0b0b0"/><rect x="14.6" y="2.0" width="1.6" height="1.6" fill="#b0b0b0"/><rect x="14.6" y="6.3" width="1.6" height="1.6" fill="#b0b0b0"/><rect x="20.9" y="2.0" width="1.6" height="1.6" fill="#b0b0b0"/><rect x="20.9" y="6.3" width="1.6" height="1.6" fill="#b0b0b0"/><rect x="27.2" y="2.0" width="1.6" height="1.6" fill="#b0b0b0"/><rect x="27.2" y="6.3" width="1.6" height="1.6" fill="#b0b0b0"/></svg>
<div class="t" style="left:512px;top:1029.7px;font-size:24px;color:#1b1b1b;">Component Tree</div>
<div class="a" style="left:502px;top:1064px;width:358px;height:2px;background:#c4c4c4;"></div>
<div class="a" style="left:504px;top:1066px;width:354px;height:534px;background:#ffffff;"></div>
<div class="a" style="left:504px;top:1142px;width:353px;height:38px;background:#d5d5d5;"></div>
<svg class="a" style="left:522px;top:1077px;" width="18" height="16" viewBox="0 0 18 16"><path d="M0 0 H18 L9 16 z" fill="#a8a8a8"/></svg>
<svg class="a" style="left:560px;top:1068px;" width="32" height="32" viewBox="0 0 32 32"><rect x="1.5" y="1.5" width="29" height="29" fill="#fff" stroke="#999" stroke-width="3"/><path d="M3 7 H29 M3 25 H29" stroke="#b0b0b0" stroke-width="1.5"/><path d="M8 7 V25 M8 16 H18" stroke="#999" stroke-width="2"/><rect x="18" y="7" width="10" height="18" fill="#cdcdcd" stroke="#a8a8a8" stroke-width="1.5"/></svg>
<div class="clip" style="left:596px;top:1060px;width:261px;height:45px;">
<div class="t" style="left:0px;top:10.3px;font-size:28px;color:#1b1b1b;font-weight:bold;">content_main</div>
<div class="t" style="left:193px;top:10.3px;font-size:28px;color:#1b1b1b;">(ConstraintLayout)</div>
</div>
<svg class="a" style="left:600px;top:1106px;" width="32" height="32" viewBox="0 0 32 32"><rect x="1" y="1" width="30" height="30" rx="3" fill="#fff" stroke="#9a9a9a" stroke-width="2"/><text x="16" y="24" font-family="Liberation Sans" font-size="19" text-anchor="middle" fill="#333" textLength="24" lengthAdjust="spacingAndGlyphs">Ab</text></svg>
<div class="clip" style="left:636px;top:1098px;width:221px;height:45px;">
<div class="t" style="left:0px;top:10.3px;font-size:28px;color:#1b1b1b;">TextView</div>
<div class="t" style="left:123px;top:10.3px;font-size:28px;color:#9a9a9a;">– &quot;Hello World!&quot;</div>
</div>
<svg class="a" style="left:600px;top:1145px;" width="32" height="32" viewBox="0 0 32 32"><defs><linearGradient id="ibg" x1="0" y1="0" x2="0" y2="1"><stop offset="0" stop-color="#f8f8f8"/><stop offset="1" stop-color="#e4e4e4"/></linearGradient></defs><rect x="1" y="1" width="30" height="30" rx="4" fill="url(#ibg)" stroke="#cfcfcf" stroke-width="2"/><rect x="6" y="6" width="20" height="20" fill="#6fa0cc"/><circle cx="14" cy="12" r="3" fill="#ffd500"/><path d="M6 26 V18.4 L11.0 16.0 L17.0 19.200000000000003 L21.6 17.0 L26 19.200000000000003 V26 Z" fill="#454545"/></svg>
<div class="t" style="left:637px;top:1146.3px;font-size:28px;color:#1b1b1b;font-weight:bold;letter-spacing:-0.28px;">imageButton</div>
<div class="a" style="left:862px;top:104px;width:1337px;height:50px;background:#ececec;"></div>
<div class="a" style="left:862px;top:154px;width:1337px;height:2px;background:#c6c6c6;"></div>
<div class="a" style="left:862px;top:155px;width:1337px;height:59px;background:#ececec;"></div>
<div class="a" style="left:860px;top:214px;width:1339px;height:2px;background:#c8c8c8;"></div>
<div class="a" style="left:860px;top:104px;width:2px;height:1500px;background:#c8c8c8;"></div>
<svg class="a" style="left:870px;top:112px;" width="32" height="32" viewBox="0 0 32 32"><rect x="1.5" y="1.5" width="29" height="29" fill="none" stroke="#1e1e1e" stroke-width="3"/><path d="M3 10 H29 M11 10 V29 M11 19 H29" stroke="#1e1e1e" stroke-width="3"/></svg>
<svg class="a" style="left:920px;top:112px;" width="32" height="32" viewBox="0 0 32 32"><rect x="1" y="1" width="30" height="30" fill="#18a0e6" stroke="#1e1e1e" stroke-width="3"/><path d="M3 9 H29 M3 23 H29 M11 3 V29 M21 3 V29" stroke="#fff" stroke-width="1.5" opacity="0.7"/></svg>
<svg class="a" style="left:970px;top:112px;" width="32" height="32" viewBox="0 0 32 32"><rect x="1" y="1" width="13" height="30" fill="#e8e8e8" stroke="#bbb" stroke-width="2"/><path d="M2 10 H13 M2 22 H13" stroke="#bbb" stroke-width="2"/><rect x="18" y="1" width="13" height="30" fill="#18a0e6" stroke="#bbb" stroke-width="2"/><path d="M19 10 H30 M19 22 H30" stroke="#bbb" stroke-width="2"/></svg>
<svg class="a" style="left:1017px;top:107px;" width="3" height="45" viewBox="0 0 3 45"><rect x="0" y="0" width="2" height="2" fill="#888"/><rect x="0" y="6" width="2" height="2" fill="#888"/><rect x="0" y="12" width="2" height="2" fill="#888"/><rect x="0" y="18" width="2" height="2" fill="#888"/><rect x="0" y="24" width="2" height="2" fill="#888"/><rect x="0" y="30" width="2" height="2" fill="#888"/><rect x="0" y="36" width="2" height="2" fill="#888"/><rect x="0" y="42" width="2" height="2" fill="#888"/></svg>
<svg class="a" style="left:1028px;top:110px;" width="36" height="36" viewBox="0 0 36 36"><rect x="9" y="6" width="14" height="22" rx="2" transform="rotate(-45 16 17)" fill="none" stroke="#1e1e1e" stroke-width="2.5"/><path d="M21 3 A14 14 0 0 1 31 14 M11 31 A14 14 0 0 1 1 20" fill="none" stroke="#18a0e6" stroke-width="2"/></svg>
<svg class="a" style="left:1064px;top:126px;" width="11" height="7" viewBox="0 0 11 7"><path d="M0 0 H11 L5.5 6 Z" fill="#2d3f5c"/></svg>
<svg class="a" style="left:1089px;top:107px;" width="3" height="45" viewBox="0 0 3 45"><rect x="0" y="0" width="2" height="2" fill="#888"/><rect x="0" y="6" width="2" height="2" fill="#888"/><rect x="0" y="12" width="2" height="2" fill="#888"/><rect x="0" y="18" width="2" height="2" fill="#888"/><rect x="0" y="24" width="2" height="2" fill="#888"/><rect x="0" y="30" width="2" height="2" fill="#888"/><rect x="0" y="36" width="2" height="2" fill="#888"/><rect x="0" y="42" width="2" height="2" fill="#888"/></svg>
<svg class="a" style="left:1107px;top:111px;" width="20" height="32" viewBox="0 0 20 32"><rect x="1.5" y="1.5" width="17" height="29" rx="3" fill="none" stroke="#18a0e6" stroke-width="3"/><rect x="6" y="26" width="8" height="2" fill="#18a0e6"/></svg>
<div class="t" style="left:1135px;top:116.0px;font-size:23px;color:#1b1b1b;">Nexus 4</div>
<svg class="a" style="left:1226px;top:128px;" width="11" height="7" viewBox="0 0 11 7"><path d="M0 0 H11 L5.5 6 Z" fill="#2d3f5c"/></svg>
<svg class="a" style="left:1257px;top:114px;" width="32" height="24" viewBox="0 0 32 24"><path d="M1 22 A15 14 0 0 1 31 22 Z" fill="#8aa81a"/><path d="M5 3 L9 10 M27 3 L23 10" stroke="#8aa81a" stroke-width="2.5"/><circle cx="10" cy="17" r="1.6" fill="#fff"/><circle cx="22" cy="17" r="1.6" fill="#fff"/></svg>
<div class="t" style="left:1291px;top:115.2px;font-size:24px;color:#1b1b1b;">23</div>
<svg class="a" style="left:1322px;top:127px;" width="11" height="7" viewBox="0 0 11 7"><path d="M0 0 H11 L5.5 6 Z" fill="#2d3f5c"/></svg>
<svg class="a" style="left:1354px;top:112px;" width="30" height="30" viewBox="0 0 30 30"><circle cx="15" cy="15" r="13.5" fill="none" stroke="#1e1e1e" stroke-width="3"/><path d="M15 1.5 A13.5 13.5 0 0 1 15 28.5 Z" fill="#1e1e1e"/></svg>
<div class="t" style="left:1386px;top:116.0px;font-size:23px;color:#1b1b1b;">NoActionBar</div>
<svg class="a" style="left:1534px;top:110px;" width="32" height="32" viewBox="0 0 32 32"><circle cx="16" cy="16" r="14" fill="none" stroke="#18a0e6" stroke-width="3"/><ellipse cx="16" cy="16" rx="6" ry="14" fill="none" stroke="#18a0e6" stroke-width="2.5"/><path d="M3 11 H29 M3 21 H29 M16 2 V30" stroke="#18a0e6" stroke-width="2.5"/></svg>
<div class="t" style="left:1568px;top:116.0px;font-size:23px;color:#1b1b1b;">Language</div>
<svg class="a" style="left:1675px;top:127px;" width="11" height="7" viewBox="0 0 11 7"><path d="M0 0 H11 L5.5 6 Z" fill="#2d3f5c"/></svg>
<svg class="a" style="left:1707px;top:107px;" width="3" height="45" viewBox="0 0 3 45"><rect x="0" y="0" width="2" height="2" fill="#888"/><rect x="0" y="6" width="2" height="2" fill="#888"/><rect x="0" y="12" width="2" height="2" fill="#888"/><rect x="0" y="18" width="2" height="2" fill="#888"/><rect x="0" y="24" width="2" height="2" fill="#888"/><rect x="0" y="30" width="2" height="2" fill="#888"/><rect x="0" y="36" width="2" height="2" fill="#888"/><rect x="0" y="42" width="2" height="2" fill="#888"/></svg>
<svg class="a" style="left:1722px;top:110px;" width="24" height="33" viewBox="0 0 24 33"><rect x="1.5" y="1.5" width="20" height="29" rx="3.5" fill="none" stroke="#1e1e1e" stroke-width="3"/><rect x="8" y="25.5" width="7" height="2" fill="#1e1e1e"/></svg>
<svg class="a" style="left:1754px;top:126px;" width="11" height="7" viewBox="0 0 11 7"><path d="M0 0 H11 L5.5 6 Z" fill="#2d3f5c"/></svg>
<svg class="a" style="left:873px;top:170px;" width="36" height="28" viewBox="0 0 36 28"><path d="M2 13.5 Q17 -1 32 13.5 Q17 28 2 13.5 Z" fill="none" stroke="#1e1e1e" stroke-width="3" stroke-linejoin="miter"/><circle cx="16.5" cy="13.5" r="7" fill="#18a0e6"/><path d="M6 25 L28 3" stroke="#ececec" stroke-width="6"/><path d="M6 25 L28 3" stroke="#1e1e1e" stroke-width="3" stroke-linecap="round"/></svg>
<svg class="a" style="left:927px;top:170px;" width="27" height="28" viewBox="0 0 27 28"><path d="M4 7 V16 A9.5 9.5 0 0 0 23 16 V7" fill="none" stroke="#1e1e1e" stroke-width="6"/><rect x="1" y="0.5" width="6" height="6" fill="#18a0e6"/><rect x="20" y="0.5" width="6" height="6" fill="#18a0e6"/><path d="M3.5 25 L25 3.5" stroke="#ececec" stroke-width="7"/><path d="M4 24.5 L24.5 4" stroke="#1e1e1e" stroke-width="3" stroke-linecap="round"/></svg>
<svg class="a" style="left:971px;top:162px;" width="3" height="44" viewBox="0 0 3 44"><rect x="0" y="0" width="2" height="2" fill="#888"/><rect x="0" y="6" width="2" height="2" fill="#888"/><rect x="0" y="12" width="2" height="2" fill="#888"/><rect x="0" y="18" width="2" height="2" fill="#888"/><rect x="0" y="24" width="2" height="2" fill="#888"/><rect x="0" y="30" width="2" height="2" fill="#888"/><rect x="0" y="36" width="2" height="2" fill="#888"/><rect x="0" y="42" width="2" height="2" fill="#888"/></svg>
<svg class="a" style="left:987px;top:167px;" width="30" height="32" viewBox="0 0 30 32"><path d="M3 5 H12 M3 5 L7 1 M3 5 L7 9 M3 27 H12 M3 27 L7 23 M3 27 L7 31" stroke="#1e1e1e" stroke-width="2.5" fill="none"/><path d="M14 9 L28 23 M28 9 L14 23" stroke="#18a0e6" stroke-width="3"/></svg>
<svg class="a" style="left:1039px;top:167px;" width="28" height="32" viewBox="0 0 28 32"><path d="M14 0 V6 M2 4 L6 8 M26 4 L22 8" stroke="#1e1e1e" stroke-width="2"/><circle cx="14" cy="17" r="8" fill="#2a9ae0"/><rect x="10" y="22" width="8" height="6" fill="#2a9ae0"/><rect x="10" y="29" width="8" height="2" fill="#2a9ae0"/></svg>
<svg class="a" style="left:1083px;top:162px;" width="3" height="44" viewBox="0 0 3 44"><rect x="0" y="0" width="2" height="2" fill="#888"/><rect x="0" y="6" width="2" height="2" fill="#888"/><rect x="0" y="12" width="2" height="2" fill="#888"/><rect x="0" y="18" width="2" height="2" fill="#888"/><rect x="0" y="24" width="2" height="2" fill="#888"/><rect x="0" y="30" width="2" height="2" fill="#888"/><rect x="0" y="36" width="2" height="2" fill="#888"/><rect x="0" y="42" width="2" height="2" fill="#888"/></svg>
<div class="t" style="left:1106px;top:169.5px;font-size:26px;color:#1b1b1b;">8</div>
<svg class="a" style="left:1143px;top:166px;" width="32" height="32" viewBox="0 0 32 32"><path d="M6 1 V10 M2 6 L6 11 L10 6 M6 31 V22 M2 26 L6 21 L10 26" stroke="#1e1e1e" stroke-width="2.5" fill="none"/><rect x="15" y="1.5" width="15" height="7" fill="none" stroke="#1e1e1e" stroke-width="2"/><rect x="15" y="12.5" width="15" height="7" fill="none" stroke="#1e1e1e" stroke-width="2"/><rect x="15" y="23.5" width="15" height="7" fill="none" stroke="#1e1e1e" stroke-width="2"/></svg>
<svg class="a" style="left:1180px;top:183px;" width="11" height="7" viewBox="0 0 11 7"><path d="M0 0 H11 L5.5 6 Z" fill="#2d3f5c"/></svg>
<svg class="a" style="left:1203px;top:166px;" width="30" height="32" viewBox="0 0 30 32"><rect x="0" y="0" width="2" height="32" fill="#18a0e6"/><rect x="7" y="6" width="23" height="6" fill="#1e1e1e"/><rect x="7" y="18" width="12" height="6" fill="#1e1e1e"/></svg>
<svg class="a" style="left:1240px;top:183px;" width="11" height="7" viewBox="0 0 11 7"><path d="M0 0 H11 L5.5 6 Z" fill="#2d3f5c"/></svg>
<svg class="a" style="left:1271px;top:166px;" width="18" height="33" viewBox="0 0 18 33"><rect x="1" y="1" width="15" height="3" fill="#1e1e1e"/><rect x="1" y="29" width="15" height="3" fill="#1e1e1e"/><rect x="7" y="7" width="3" height="3" fill="#18a0e6"/><rect x="7" y="14" width="3" height="3" fill="#18a0e6"/><rect x="7" y="21" width="3" height="3" fill="#18a0e6"/></svg>
<svg class="a" style="left:1300px;top:183px;" width="11" height="7" viewBox="0 0 11 7"><path d="M0 0 H11 L5.5 6 Z" fill="#2d3f5c"/></svg>
<svg class="a" style="left:1858px;top:168px;" width="32" height="32" viewBox="0 0 32 32"><circle cx="16" cy="16" r="14" fill="none" stroke="#444" stroke-width="3"/><rect x="8" y="14.5" width="16" height="3" fill="#444"/></svg>
<div class="t" style="left:1902px;top:173.7px;font-size:24px;color:#1b1b1b;">73%</div>
<svg class="a" style="left:1966px;top:168px;" width="32" height="32" viewBox="0 0 32 32"><circle cx="16" cy="16" r="14" fill="none" stroke="#444" stroke-width="3"/><rect x="8" y="14.5" width="16" height="3" fill="#444"/><rect x="14.5" y="8" width="3" height="16" fill="#444"/></svg>
<svg class="a" style="left:2016px;top:170px;" width="32" height="28" viewBox="0 0 32 28"><rect x="1.5" y="1.5" width="29" height="25" rx="2" fill="none" stroke="#1e1e1e" stroke-width="3"/><path d="M7 12 V7 H12 M25 16 V21 H20" stroke="#1e1e1e" stroke-width="3" fill="none"/></svg>
<svg class="a" style="left:2067px;top:167px;" width="32" height="34" viewBox="0 0 32 34"><path d="M9 30 Q4 26 1 21 Q0 19 3 19 L9 23 V6 Q9 3 11 3 Q13 3 13 6 V15 V3 Q13 0 15.5 0 Q18 0 18 3 V15 V4 Q18 1 20.5 1 Q23 1 23 4 V16 V8 Q23 5 25 5 Q28 5 28 8 V24 Q28 33 19 33 Q13 33 9 30 Z" fill="#000"/></svg>
<svg class="a" style="left:2113px;top:163px;" width="3" height="44" viewBox="0 0 3 44"><rect x="0" y="0" width="2" height="2" fill="#888"/><rect x="0" y="6" width="2" height="2" fill="#888"/><rect x="0" y="12" width="2" height="2" fill="#888"/><rect x="0" y="18" width="2" height="2" fill="#888"/><rect x="0" y="24" width="2" height="2" fill="#888"/><rect x="0" y="30" width="2" height="2" fill="#888"/><rect x="0" y="36" width="2" height="2" fill="#888"/><rect x="0" y="42" width="2" height="2" fill="#888"/></svg>
<div class="a" style="left:2128px;top:168px;width:32px;height:32px;background:#da4a2c;"></div>
<div class="t" style="left:2137px;top:175.2px;font-size:21px;color:#ffffff;font-weight:bold;">3</div>
<div class="a" style="left:862px;top:216px;width:1337px;height:40px;background:#ffffff;"></div>
<div class="a" style="left:862px;top:216px;width:40px;height:1386px;background:#ffffff;"></div>
<div class="a" style="left:902px;top:256px;width:1297px;height:1346px;background:#f2f2f2;"></div>
<svg class="a" style="left:862px;top:216px;" width="1337" height="40" viewBox="0 0 1337 40"><rect x="7" y="0" width="2" height="13" fill="#d3d3d3"/><rect x="27" y="0" width="2" height="13" fill="#d3d3d3"/><rect x="47" y="0" width="2" height="13" fill="#d3d3d3"/><rect x="67" y="0" width="2" height="13" fill="#d3d3d3"/><rect x="87" y="0" width="2" height="13" fill="#d3d3d3"/><rect x="107" y="0" width="2" height="13" fill="#d3d3d3"/><rect x="127" y="0" width="2" height="40" fill="#d3d3d3"/><rect x="147" y="0" width="2" height="13" fill="#d3d3d3"/><rect x="167" y="0" width="2" height="13" fill="#d3d3d3"/><rect x="187" y="0" width="2" height="13" fill="#d3d3d3"/><rect x="207" y="0" width="2" height="13" fill="#d3d3d3"/><rect x="227" y="0" width="2" height="13" fill="#d3d3d3"/><rect x="247" y="0" width="2" height="13" fill="#d3d3d3"/><rect x="267" y="0" width="2" height="13" fill="#d3d3d3"/><rect x="287" y="0" width="2" height="13" fill="#d3d3d3"/><rect x="307" y="0" width="2" height="13" fill="#d3d3d3"/><rect x="327" y="0" width="2" height="40" fill="#d3d3d3"/><rect x="347" y="0" width="2" height="13" fill="#d3d3d3"/><rect x="367" y="0" width="2" height="13" fill="#d3d3d3"/><rect x="387" y="0" width="2" height="13" fill="#d3d3d3"/><rect x="407" y="0" width="2" height="13" fill="#d3d3d3"/><rect x="427" y="0" width="2" height="13" fill="#d3d3d3"/><rect x="447" y="0" width="2" height="13" fill="#d3d3d3"/><rect x="467" y="0" width="2" height="13" fill="#d3d3d3"/><rect x="487" y="0" width="2" height="13" fill="#d3d3d3"/><rect x="507" y="0" width="2" height="13" fill="#d3d3d3"/><rect x="527" y="0" width="2" height="40" fill="#d3d3d3"/><rect x="547" y="0" width="2" height="13" fill="#d3d3d3"/><rect x="567" y="0" width="2" height="13" fill="#d3d3d3"/><rect x="587" y="0" width="2" height="13" fill="#d3d3d3"/><rect x="607" y="0" width="2" height="13" fill="#d3d3d3"/><rect x="627" y="0" width="2" height="13" fill="#d3d3d3"/><rect x="647" y="0" width="2" height="13" fill="#d3d3d3"/><rect x="667" y="0" width="2" height="13" fill="#d3d3d3"/><rect x="687" y="0" width="2" height="13" fill="#d3d3d3"/><rect x="707" y="0" width="2" height="13" fill="#d3d3d3"/><rect x="727" y="0" width="2" height="40" fill="#d3d3d3"/><rect x="747" y="0" width="2" height="13" fill="#d3d3d3"/><rect x="767" y="0" width="2" height="13" fill="#d3d3d3"/><rect x="787" y="0" width="2" height="13" fill="#d3d3d3"/><rect x="807" y="0" width="2" height="13" fill="#d3d3d3"/><rect x="827" y="0" width="2" height="13" fill="#d3d3d3"/><rect x="847" y="0" width="2" height="13" fill="#d3d3d3"/><rect x="867" y="0" width="2" height="13" fill="#d3d3d3"/><rect x="887" y="0" width="2" height="13" fill="#d3d3d3"/><rect x="907" y="0" width="2" height="13" fill="#d3d3d3"/><rect x="927" y="0" width="2" height="40" fill="#d3d3d3"/><rect x="947" y="0" width="2" height="13" fill="#d3d3d3"/><rect x="967" y="0" width="2" height="13" fill="#d3d3d3"/><rect x="987" y="0" width="2" height="13" fill="#d3d3d3"/><rect x="1007" y="0" width="2" height="13" fill="#d3d3d3"/><rect x="1027" y="0" width="2" height="13" fill="#d3d3d3"/><rect x="1047" y="0" width="2" height="13" fill="#d3d3d3"/><rect x="1067" y="0" width="2" height="13" fill="#d3d3d3"/><rect x="1087" y="0" width="2" height="13" fill="#d3d3d3"/><rect x="1107" y="0" width="2" height="13" fill="#d3d3d3"/><rect x="1127" y="0" width="2" height="40" fill="#d3d3d3"/><rect x="1147" y="0" width="2" height="13" fill="#d3d3d3"/><rect x="1167" y="0" width="2" height="13" fill="#d3d3d3"/><rect x="1187" y="0" width="2" height="13" fill="#d3d3d3"/><rect x="1207" y="0" width="2" height="13" fill="#d3d3d3"/><rect x="1227" y="0" width="2" height="13" fill="#d3d3d3"/><rect x="1247" y="0" width="2" height="13" fill="#d3d3d3"/><rect x="1267" y="0" width="2" height="13" fill="#d3d3d3"/><rect x="1287" y="0" width="2" height="13" fill="#d3d3d3"/><rect x="1307" y="0" width="2" height="13" fill="#d3d3d3"/><rect x="1327" y="0" width="2" height="40" fill="#d3d3d3"/></svg>
<div class="t" style="left:995px;top:238.3px;font-size:18px;color:#9a9a9a;letter-spacing:1px;">0</div>
<div class="t" style="left:1195px;top:238.3px;font-size:18px;color:#9a9a9a;letter-spacing:1px;">100</div>
<div class="t" style="left:1395px;top:238.3px;font-size:18px;color:#9a9a9a;letter-spacing:1px;">200</div>
<div class="t" style="left:1595px;top:238.3px;font-size:18px;color:#9a9a9a;letter-spacing:1px;">300</div>
<div class="t" style="left:1795px;top:238.3px;font-size:18px;color:#9a9a9a;letter-spacing:1px;">400</div>
<div class="t" style="left:1995px;top:238.3px;font-size:18px;color:#9a9a9a;letter-spacing:1px;">500</div>
<div class="t" style="left:2195px;top:238.3px;font-size:18px;color:#9a9a9a;letter-spacing:1px;">6</div>
<svg class="a" style="left:862px;top:216px;" width="40" height="1386" viewBox="0 0 40 1386"><rect x="0" y="19" width="13" height="2" fill="#d3d3d3"/><rect x="0" y="39" width="13" height="2" fill="#d3d3d3"/><rect x="0" y="59" width="13" height="2" fill="#d3d3d3"/><rect x="0" y="79" width="13" height="2" fill="#d3d3d3"/><rect x="0" y="99" width="13" height="2" fill="#d3d3d3"/><rect x="0" y="119" width="13" height="2" fill="#d3d3d3"/><rect x="0" y="139" width="40" height="2" fill="#d3d3d3"/><rect x="0" y="159" width="13" height="2" fill="#d3d3d3"/><rect x="0" y="179" width="13" height="2" fill="#d3d3d3"/><rect x="0" y="199" width="13" height="2" fill="#d3d3d3"/><rect x="0" y="219" width="13" height="2" fill="#d3d3d3"/><rect x="0" y="239" width="13" height="2" fill="#d3d3d3"/><rect x="0" y="259" width="13" height="2" fill="#d3d3d3"/><rect x="0" y="279" width="13" height="2" fill="#d3d3d3"/><rect x="0" y="299" width="13" height="2" fill="#d3d3d3"/><rect x="0" y="319" width="13" height="2" fill="#d3d3d3"/><rect x="0" y="339" width="40" height="2" fill="#d3d3d3"/><rect x="0" y="359" width="13" height="2" fill="#d3d3d3"/><rect x="0" y="379" width="13" height="2" fill="#d3d3d3"/><rect x="0" y="399" width="13" height="2" fill="#d3d3d3"/><rect x="0" y="419" width="13" height="2" fill="#d3d3d3"/><rect x="0" y="439" width="13" height="2" fill="#d3d3d3"/><rect x="0" y="459" width="13" height="2" fill="#d3d3d3"/><rect x="0" y="479" width="13" height="2" fill="#d3d3d3"/><rect x="0" y="499" width="13" height="2" fill="#d3d3d3"/><rect x="0" y="519" width="13" height="2" fill="#d3d3d3"/><rect x="0" y="539" width="40" height="2" fill="#d3d3d3"/><rect x="0" y="559" width="13" height="2" fill="#d3d3d3"/><rect x="0" y="579" width="13" height="2" fill="#d3d3d3"/><rect x="0" y="599" width="13" height="2" fill="#d3d3d3"/><rect x="0" y="619" width="13" height="2" fill="#d3d3d3"/><rect x="0" y="639" width="13" height="2" fill="#d3d3d3"/><rect x="0" y="659" width="13" height="2" fill="#d3d3d3"/><rect x="0" y="679" width="13" height="2" fill="#d3d3d3"/><rect x="0" y="699" width="13" height="2" fill="#d3d3d3"/><rect x="0" y="719" width="13" height="2" fill="#d3d3d3"/><rect x="0" y="739" width="40" height="2" fill="#d3d3d3"/><rect x="0" y="759" width="13" height="2" fill="#d3d3d3"/><rect x="0" y="779" width="13" height="2" fill="#d3d3d3"/><rect x="0" y="799" width="13" height="2" fill="#d3d3d3"/><rect x="0" y="819" width="13" height="2" fill="#d3d3d3"/><rect x="0" y="839" width="13" height="2" fill="#d3d3d3"/><rect x="0" y="859" width="13" height="2" fill="#d3d3d3"/><rect x="0" y="879" width="13" height="2" fill="#d3d3d3"/><rect x="0" y="899" width="13" height="2" fill="#d3d3d3"/><rect x="0" y="919" width="13" height="2" fill="#d3d3d3"/><rect x="0" y="939" width="40" height="2" fill="#d3d3d3"/><rect x="0" y="959" width="13" height="2" fill="#d3d3d3"/><rect x="0" y="979" width="13" height="2" fill="#d3d3d3"/><rect x="0" y="999" width="13" height="2" fill="#d3d3d3"/><rect x="0" y="1019" width="13" height="2" fill="#d3d3d3"/><rect x="0" y="1039" width="13" height="2" fill="#d3d3d3"/><rect x="0" y="1059" width="13" height="2" fill="#d3d3d3"/><rect x="0" y="1079" width="13" height="2" fill="#d3d3d3"/><rect x="0" y="1099" width="13" height="2" fill="#d3d3d3"/><rect x="0" y="1119" width="13" height="2" fill="#d3d3d3"/><rect x="0" y="1139" width="40" height="2" fill="#d3d3d3"/><rect x="0" y="1159" width="13" height="2" fill="#d3d3d3"/><rect x="0" y="1179" width="13" height="2" fill="#d3d3d3"/><rect x="0" y="1199" width="13" height="2" fill="#d3d3d3"/><rect x="0" y="1219" width="13" height="2" fill="#d3d3d3"/><rect x="0" y="1239" width="13" height="2" fill="#d3d3d3"/><rect x="0" y="1259" width="13" height="2" fill="#d3d3d3"/><rect x="0" y="1279" width="13" height="2" fill="#d3d3d3"/><rect x="0" y="1299" width="13" height="2" fill="#d3d3d3"/><rect x="0" y="1319" width="13" height="2" fill="#d3d3d3"/><rect x="0" y="1339" width="40" height="2" fill="#d3d3d3"/><rect x="0" y="1359" width="13" height="2" fill="#d3d3d3"/><rect x="0" y="1379" width="13" height="2" fill="#d3d3d3"/></svg>
<div class="t" style="left:885px;top:352px;font-size:18px;color:#9a9a9a;letter-spacing:1px;transform-origin:0 0;transform:rotate(-90deg);">0</div>
<div class="t" style="left:885px;top:552px;font-size:18px;color:#9a9a9a;letter-spacing:1px;transform-origin:0 0;transform:rotate(-90deg);">100</div>
<div class="t" style="left:885px;top:752px;font-size:18px;color:#9a9a9a;letter-spacing:1px;transform-origin:0 0;transform:rotate(-90deg);">200</div>
<div class="t" style="left:885px;top:952px;font-size:18px;color:#9a9a9a;letter-spacing:1px;transform-origin:0 0;transform:rotate(-90deg);">300</div>
<div class="t" style="left:885px;top:1152px;font-size:18px;color:#9a9a9a;letter-spacing:1px;transform-origin:0 0;transform:rotate(-90deg);">400</div>
<div class="t" style="left:885px;top:1352px;font-size:18px;color:#9a9a9a;letter-spacing:1px;transform-origin:0 0;transform:rotate(-90deg);">500</div>
<div class="t" style="left:885px;top:1552px;font-size:18px;color:#9a9a9a;letter-spacing:1px;transform-origin:0 0;transform:rotate(-90deg);">600</div>
<div class="a" style="left:990px;top:356px;width:564px;height:37px;background:#000000;"></div>
<div class="a" style="left:990px;top:393px;width:564px;height:82px;background:#3f51b5;"></div>
<div class="a" style="left:990px;top:475px;width:564px;height:750px;background:#fafafa;"></div>
<div class="a" style="left:990px;top:1225px;width:564px;height:70px;background:#000000;"></div>
<svg class="a" style="left:1442px;top:363px;" width="30" height="24" viewBox="0 0 30 24"><path d="M0 6 Q15 -4 30 6 L15 23 Z" fill="#fff"/></svg>
<div class="a" style="left:1476px;top:366px;width:17px;height:20px;background:#ffffff;"></div>
<div class="a" style="left:1481px;top:363px;width:7px;height:4px;background:#ffffff;"></div>
<div class="t" style="left:1502px;top:365.4px;font-size:22px;color:#ffffff;">6:00</div>
<div class="a" style="left:1012px;top:732px;width:59px;height:47px;background:#d6d7d7;border-radius:3px;"></div>
<svg class="a" style="left:1023.5px;top:737.5px" width="36" height="36" viewBox="0 0 24 24"><path fill="#ff4081" d="M22.7 19l-9.1-9.1c.9-2.3.4-5-1.5-6.9-2-2-5-2.4-7.4-1.3L9 6 6 9 1.6 4.7C.4 7.1.9 10.1 2.9 12.1c1.9 1.9 4.6 2.4 6.9 1.5l9.1 9.1c.4.4 1 .4 1.4 0l2.3-2.3c.5-.4.5-1.1.1-1.4z"/></svg>
<div class="t" style="left:1217px;top:799.1px;font-size:20px;color:#757575;">Hello World!</div>
<div class="a" style="left:1448px;top:1119px;width:82px;height:82px;border-radius:50%;background:#ff4081;box-shadow:0 3px 4px rgba(0,0,0,0.30), 0 1px 6px rgba(0,0,0,0.12);"></div>
<svg class="a" style="left:1472px;top:1149px;" width="35" height="24" viewBox="0 0 35 24"><defs><linearGradient id="env" x1="0" y1="0" x2="0" y2="1"><stop offset="0" stop-color="#ffffff"/><stop offset="1" stop-color="#e8e8e8"/></linearGradient></defs><rect x="0" y="0" width="35" height="24" rx="1.5" fill="url(#env)"/><path d="M1 1.5 L17.5 13.5 L34 1.5" fill="none" stroke="#ff4081" stroke-width="2"/><path d="M1 23.5 L12.5 11.5 M34 23.5 L22.5 11.5" stroke="#ff4081" stroke-width="1.6"/></svg>
<svg class="a" style="left:1064px;top:1246px;" width="26" height="28" viewBox="0 0 26 28"><path d="M23 2.5 V25.5 L2.5 14 Z" fill="none" stroke="#ececec" stroke-width="2.6" stroke-linejoin="round"/></svg>
<svg class="a" style="left:1258px;top:1246px;" width="28" height="28" viewBox="0 0 28 28"><circle cx="14" cy="14" r="11.5" fill="none" stroke="#ececec" stroke-width="2.6"/></svg>
<svg class="a" style="left:1453px;top:1248px;" width="25" height="25" viewBox="0 0 25 25"><rect x="1.5" y="1.5" width="22" height="22" rx="1.5" fill="none" stroke="#e6e6e6" stroke-width="2.5"/></svg>
<svg class="a" style="left:987px;top:315px;" width="2" height="1018" viewBox="0 0 2 1018"><path d="M1 0 V1018" stroke="#bababa" stroke-width="2" stroke-dasharray="9.5 6.5" stroke-dashoffset="0"/></svg>
<svg class="a" style="left:1553px;top:315px;" width="2" height="41" viewBox="0 0 2 41"><path d="M1 0 V41" stroke="#bababa" stroke-width="2" stroke-dasharray="9.5 6.5" stroke-dashoffset="0"/></svg>
<svg class="a" style="left:1553px;top:475px;" width="2" height="750" viewBox="0 0 2 750"><path d="M1 0 V750" stroke="#bababa" stroke-width="2" stroke-dasharray="9.5 6.5" stroke-dashoffset="-160"/></svg>
<svg class="a" style="left:1553px;top:1295px;" width="2" height="38" viewBox="0 0 2 38"><path d="M1 0 V38" stroke="#bababa" stroke-width="2" stroke-dasharray="9.5 6.5" stroke-dashoffset="-980"/></svg>
<svg class="a" style="left:949px;top:353px;" width="646" height="2" viewBox="0 0 646 2"><path d="M0 1 H646" stroke="#bababa" stroke-width="2" stroke-dasharray="10 6" stroke-dashoffset="0"/></svg>
<svg class="a" style="left:949px;top:1294px;" width="40" height="2" viewBox="0 0 40 2"><path d="M0 1 H40" stroke="#bababa" stroke-width="2" stroke-dasharray="10 6" stroke-dashoffset="0"/></svg>
<svg class="a" style="left:1554px;top:1294px;" width="20" height="2" viewBox="0 0 20 2"><path d="M0 1 H20" stroke="#bababa" stroke-width="2" stroke-dasharray="10 6" stroke-dashoffset="0"/></svg>
<svg class="a" style="left:1562px;top:1300px;" width="36" height="38" viewBox="0 0 36 38"><path d="M1 37 L35 3 M16 37 L35 18" stroke="#555" stroke-width="1.5"/></svg>
<div class="a" style="left:1574px;top:356px;width:564px;height:940px;background:#18366f;"></div>
<div class="a" style="left:1574px;top:356px;width:564px;height:37px;background:#14336e;"></div>
<div class="a" style="left:1574px;top:1225px;width:564px;height:71px;background:#14336e;"></div>
<div class="a" style="left:1574px;top:393px;width:2px;height:834px;background:#5a95d0;"></div>
<div class="a" style="left:2136px;top:393px;width:2px;height:834px;background:#5a95d0;"></div>
<svg class="a" style="left:1574px;top:391px;" width="564" height="3" viewBox="0 0 564 3"><path d="M0 1.5 H564" stroke="#5b8ac4" stroke-width="2" stroke-dasharray="16 16"/></svg>
<div class="a" style="left:1574px;top:1223px;width:564px;height:1.5px;background:#5a8cc8;"></div>
<svg class="a" style="left:1574px;top:1225px;" width="564" height="3" viewBox="0 0 564 3"><path d="M0 1.5 H564" stroke="#5b8ac4" stroke-width="2" stroke-dasharray="16 16"/></svg>
<div class="t" style="left:1596px;top:333.1px;font-size:20px;color:#1f3d78;letter-spacing:0.2px;">ConstraintLayout</div>
<svg class="a" style="left:1574px;top:706px;" width="102" height="98" viewBox="0 0 102 98"><defs><pattern id="st" width="12" height="12" patternUnits="userSpaceOnUse" patternTransform="rotate(45)"><rect width="12" height="12" fill="#1f4a99"/><rect x="0" y="0" width="1" height="12" fill="#3d7cf0"/></pattern></defs>
<rect x="16" y="16" width="70" height="66" fill="url(#st)"/>
<rect x="16" y="16" width="70" height="66" fill="none" stroke="#b8c6e6" stroke-width="2"/>
<rect x="8" y="8" width="16" height="16" fill="#b4c4ea"/><rect x="78" y="8" width="16" height="16" fill="#b4c4ea"/>
<rect x="8" y="74" width="16" height="16" fill="#b4c4ea"/><rect x="78" y="74" width="16" height="16" fill="#b4c4ea"/>
<g fill="#1f4a99" stroke="#f0f0ff" stroke-width="2.2"><circle cx="50" cy="16" r="8.5"/><circle cx="16" cy="49" r="8.5"/><circle cx="86" cy="49" r="8.5"/><circle cx="50" cy="82" r="8.5"/></g></svg>
<svg class="a" style="left:1799px;top:795px;" width="116" height="27" viewBox="0 0 116 27"><defs><pattern id="st2" width="14.5" height="14.5" patternUnits="userSpaceOnUse" patternTransform="rotate(45)"><rect width="14.5" height="14.5" fill="#18366f"/><rect x="0" y="0" width="1" height="14.5" fill="#3a6fd0"/></pattern></defs><rect x="1" y="1" width="114" height="25" fill="url(#st2)" stroke="#5b8fcf" stroke-width="2"/></svg>
<div class="t" style="left:1802px;top:801.1px;font-size:20px;color:#e6e6e6;">Hello World!</div>
<div class="a" style="left:1569px;top:740px;width:3px;height:13px;background:#1f3d78;"></div>
<div class="a" style="left:1569px;top:760px;width:3px;height:14px;background:#1f3d78;"></div>
<div class="a" style="left:2199px;top:104px;width:641px;height:1500px;background:#ededed;"></div>
<div class="a" style="left:2198px;top:104px;width:4px;height:1500px;background:#c6c6c6;"></div>
<div class="a" style="left:2202px;top:104px;width:636px;height:48px;background:#ececec;"></div>
<div class="a" style="left:2199px;top:152px;width:641px;height:3px;background:#c4c4c4;"></div>
<div class="a" style="left:2838px;top:104px;width:1px;height:48px;background:#c6c6c6;"></div>
<div class="a" style="left:2836px;top:152px;width:3px;height:1452px;background:#c6c6c6;"></div>
<div class="t" style="left:2210px;top:115.7px;font-size:24px;color:#1b1b1b;">Properties</div>
<svg class="a" style="left:2687px;top:116px;" width="36" height="26" viewBox="0 0 36 26"><path d="M8 19 H34 M34 7 H8" stroke="#2a8fd0" stroke-width="2.5"/><path d="M9 13 L1 19 L9 25 Z M26 1 L34 7 L26 13 Z" fill="#2a8fd0"/></svg>
<div class="a" style="left:2730px;top:112px;width:1px;height:36px;background:#d0d0d0;"></div>
<svg class="a" style="left:2744px;top:115px;" width="40" height="26" viewBox="0 0 40 26"><g transform="translate(13 13)" fill="#777777"><rect x="-2.6" y="-12" width="5.2" height="6" transform="rotate(0)"/><rect x="-2.6" y="-12" width="5.2" height="6" transform="rotate(45)"/><rect x="-2.6" y="-12" width="5.2" height="6" transform="rotate(90)"/><rect x="-2.6" y="-12" width="5.2" height="6" transform="rotate(135)"/><rect x="-2.6" y="-12" width="5.2" height="6" transform="rotate(180)"/><rect x="-2.6" y="-12" width="5.2" height="6" transform="rotate(225)"/><rect x="-2.6" y="-12" width="5.2" height="6" transform="rotate(270)"/><rect x="-2.6" y="-12" width="5.2" height="6" transform="rotate(315)"/><circle r="8.6"/><circle r="3.4" fill="#ececec"/></g><path d="M29 11 H39 L34 17 Z" fill="#777777"/></svg>
<svg class="a" style="left:2799px;top:116px;" width="28" height="24" viewBox="0 0 28 24"><path d="M1 8.5 H11" stroke="#666" stroke-width="2.2"/><path d="M17 8.5 L11 3.5 V13.5 Z" fill="#666"/><rect x="19" y="1" width="6" height="22" fill="#666"/><rect x="20.6" y="12" width="2.8" height="9" fill="#ececec"/></svg>
<div class="t" style="left:2210px;top:171.3px;font-size:28px;color:#1b1b1b;">ID</div>
<div class="a" style="left:2468px;top:162px;width:353px;height:46px;background:#ffffff;border:2px solid #9a9a9a;"></div>
<div class="t" style="left:2481px;top:170.3px;font-size:28px;color:#0a20f0;">imageButton</div>
<div class="a" style="left:2210px;top:212px;width:620px;height:432px;background:#e7e7e7;"></div>
<div class="a" style="left:2452px;top:220px;width:188px;height:14px;background:#d9d9d9;"></div>
<div class="a" style="left:2452px;top:233px;width:188px;height:2px;background:#222;"></div>
<div class="a" style="left:2452px;top:579px;width:188px;height:14px;background:#d9d9d9;"></div>
<div class="a" style="left:2452px;top:577px;width:188px;height:2px;background:#222;"></div>
<div class="a" style="left:2262px;top:311px;width:15px;height:189px;background:#d9d9d9;"></div>
<div class="a" style="left:2276px;top:311px;width:2px;height:189px;background:#222;"></div>
<div class="a" style="left:2816px;top:311px;width:14px;height:189px;background:#d9d9d9;"></div>
<div class="a" style="left:2815px;top:311px;width:2px;height:189px;background:#222;"></div>
<div class="a" style="left:2452px;top:311px;width:188px;height:188px;background:#dcdcdc;border:2px solid #252525;"></div>
<svg class="a" style="left:2535px;top:331px;" width="19" height="46" viewBox="0 0 19 46"><g transform="translate(0 0)"><path d="M1 1 L9 9.5 L17 1" fill="none" stroke="#222" stroke-width="2"/></g><g transform="translate(0 16)"><path d="M1 1 L9 9.5 L17 1" fill="none" stroke="#222" stroke-width="2"/></g><g transform="translate(0 32)"><path d="M1 1 L9 9.5 L17 1" fill="none" stroke="#222" stroke-width="2"/></g></svg>
<svg class="a" style="left:2535px;top:440px;" width="19" height="48" viewBox="0 0 19 48"><g transform="translate(0 0)"><path d="M1 10.5 L9 2 L17 10.5" fill="none" stroke="#222" stroke-width="2"/></g><g transform="translate(0 16)"><path d="M1 10.5 L9 2 L17 10.5" fill="none" stroke="#222" stroke-width="2"/></g><g transform="translate(0 32)"><path d="M1 10.5 L9 2 L17 10.5" fill="none" stroke="#222" stroke-width="2"/></g></svg>
<svg class="a" style="left:2471px;top:396px;" width="46" height="21" viewBox="0 0 46 21"><g transform="translate(0 0)"><path d="M1 1 L10 10 L1 19" fill="none" stroke="#222" stroke-width="2"/></g><g transform="translate(17 0)"><path d="M1 1 L10 10 L1 19" fill="none" stroke="#222" stroke-width="2"/></g><g transform="translate(34 0)"><path d="M1 1 L10 10 L1 19" fill="none" stroke="#222" stroke-width="2"/></g></svg>
<svg class="a" style="left:2573px;top:396px;" width="46" height="21" viewBox="0 0 46 21"><g transform="translate(0 0)"><path d="M10.5 1 L1.5 10 L10.5 19" fill="none" stroke="#222" stroke-width="2"/></g><g transform="translate(17 0)"><path d="M10.5 1 L1.5 10 L10.5 19" fill="none" stroke="#222" stroke-width="2"/></g><g transform="translate(34 0)"><path d="M10.5 1 L1.5 10 L10.5 19" fill="none" stroke="#222" stroke-width="2"/></g></svg>
<div class="t" style="left:2210px;top:656.3px;font-size:28px;color:#1b1b1b;letter-spacing:0.41px;">layout_width</div>
<div class="t" style="left:2210px;top:708.3px;font-size:28px;color:#1b1b1b;letter-spacing:0.33px;">layout_height</div>
<div class="t" style="left:2210px;top:818.3px;font-size:28px;color:#1b1b1b;letter-spacing:-0.04px;">srcCompat</div>
<div class="t" style="left:2210px;top:873.8px;font-size:28px;color:#1b1b1b;letter-spacing:0.49px;">contentDescription</div>
<div class="t" style="left:2210px;top:927.3px;font-size:28px;color:#1b1b1b;letter-spacing:0.26px;">style</div>
<div class="t" style="left:2210px;top:982.3px;font-size:28px;color:#1b1b1b;letter-spacing:1.0px;">tint</div>
<div class="t" style="left:2210px;top:1037.8px;font-size:28px;color:#1b1b1b;letter-spacing:0.18px;">background</div>
<div class="t" style="left:2210px;top:1094.3px;font-size:28px;color:#1b1b1b;letter-spacing:0.49px;">backgroundTint</div>
<div class="t" style="left:2210px;top:1148.3px;font-size:28px;color:#1b1b1b;letter-spacing:-0.38px;">scaleType</div>
<div class="t" style="left:2210px;top:1202.3px;font-size:28px;color:#1b1b1b;letter-spacing:0.03px;">elevation</div>
<div class="t" style="left:2210px;top:1258.3px;font-size:28px;color:#1b1b1b;letter-spacing:0.29px;">onClick</div>
<div class="t" style="left:2210px;top:1304.3px;font-size:28px;color:#1b1b1b;letter-spacing:-0.29px;">adjustViewBounds</div>
<div class="t" style="left:2210px;top:1344.3px;font-size:28px;color:#1b1b1b;letter-spacing:-0.03px;">cropToPadding</div>
<div class="t" style="left:2210px;top:1389.3px;font-size:28px;color:#1b1b1b;letter-spacing:0.9px;">visibility</div>
<div class="t" style="left:2210px;top:774.6px;font-size:27px;color:#1b1b1b;font-weight:bold;letter-spacing:0.4px;">ImageButton</div>
<div class="a" style="left:2465px;top:650px;width:357px;height:40px;background:#fff;border-radius:5px;box-shadow:0 1px 1.5px rgba(0,0,0,0.35), 0 0 0 0.5px rgba(0,0,0,0.12);"></div>
<div class="a" style="left:2789px;top:650px;width:33px;height:40px;border-radius:0 5px 5px 0;background:linear-gradient(#5aa8ff,#1a6fe8);"></div>
<svg class="a" style="left:2796px;top:656px;" width="20" height="28" viewBox="0 0 20 28"><path d="M3 10 L10 3 L17 10 M3 18 L10 25 L17 18" fill="none" stroke="#fff" stroke-width="2.4"/></svg>
<div class="t" style="left:2478px;top:656.3px;font-size:28px;color:#0a20f0;">wrap_content</div>
<div class="a" style="left:2465px;top:702px;width:357px;height:40px;background:#fff;border-radius:5px;box-shadow:0 1px 1.5px rgba(0,0,0,0.35), 0 0 0 0.5px rgba(0,0,0,0.12);"></div>
<div class="a" style="left:2789px;top:702px;width:33px;height:40px;border-radius:0 5px 5px 0;background:linear-gradient(#5aa8ff,#1a6fe8);"></div>
<svg class="a" style="left:2796px;top:708px;" width="20" height="28" viewBox="0 0 20 28"><path d="M3 10 L10 3 L17 10 M3 18 L10 25 L17 18" fill="none" stroke="#fff" stroke-width="2.4"/></svg>
<div class="t" style="left:2478px;top:708.3px;font-size:28px;color:#0a20f0;">wrap_content</div>
<div class="a" style="left:2210px;top:757px;width:618px;height:2px;background:#d4d4d4;"></div>
<div class="a" style="left:2468px;top:810px;width:314px;height:45px;background:#ffffff;border:2px solid #9a9a9a;"></div>
<div class="clip" style="left:2484px;top:812px;width:296px;height:41px;">
<div class="t" style="left:-8px;top:8.3px;font-size:28px;color:#0a20f0;letter-spacing:0.2px;">e/ic_build_black_24dp</div>
</div>
<svg class="a" style="left:2801px;top:831px;" width="18" height="4" viewBox="0 0 18 4"><circle cx="2" cy="2" r="1.3" fill="#555"/><circle cx="9" cy="2" r="1.3" fill="#555"/><circle cx="16" cy="2" r="1.3" fill="#555"/></svg>
<div class="a" style="left:2468px;top:866px;width:314px;height:45px;background:#ffffff;border:2px solid #9a9a9a;"></div>
<svg class="a" style="left:2801px;top:886px;" width="18" height="4" viewBox="0 0 18 4"><circle cx="2" cy="2" r="1.3" fill="#555"/><circle cx="9" cy="2" r="1.3" fill="#555"/><circle cx="16" cy="2" r="1.3" fill="#555"/></svg>
<div class="a" style="left:2465px;top:923px;width:318px;height:40px;background:#fff;border-radius:5px;box-shadow:0 1px 1.5px rgba(0,0,0,0.35), 0 0 0 0.5px rgba(0,0,0,0.12);"></div>
<div class="a" style="left:2750px;top:923px;width:33px;height:40px;border-radius:0 5px 5px 0;background:linear-gradient(#5aa8ff,#1a6fe8);"></div>
<svg class="a" style="left:2757px;top:929px;" width="20" height="28" viewBox="0 0 20 28"><path d="M3 10 L10 3 L17 10 M3 18 L10 25 L17 18" fill="none" stroke="#fff" stroke-width="2.4"/></svg>
<div class="t" style="left:2478px;top:929.3px;font-size:28px;color:#808080;">imageButtonStyle</div>
<svg class="a" style="left:2801px;top:941px;" width="18" height="4" viewBox="0 0 18 4"><circle cx="2" cy="2" r="1.3" fill="#555"/><circle cx="9" cy="2" r="1.3" fill="#555"/><circle cx="16" cy="2" r="1.3" fill="#555"/></svg>
<div class="a" style="left:2458px;top:982px;width:28px;height:28px;background:#ff4081;"></div>
<div class="a" style="left:2495px;top:974px;width:287px;height:45px;background:#ffffff;border:2px solid #9a9a9a;"></div>
<div class="clip" style="left:2497px;top:976px;width:283px;height:41px;">
<div class="t" style="left:8px;top:8.3px;font-size:28px;color:#0a20f0;letter-spacing:0.3px;">@color/colorAccent</div>
</div>
<svg class="a" style="left:2801px;top:995px;" width="18" height="4" viewBox="0 0 18 4"><circle cx="2" cy="2" r="1.3" fill="#555"/><circle cx="9" cy="2" r="1.3" fill="#555"/><circle cx="16" cy="2" r="1.3" fill="#555"/></svg>
<div class="a" style="left:2468px;top:1029px;width:314px;height:45px;background:#ffffff;border:2px solid #9a9a9a;"></div>
<div class="clip" style="left:2484px;top:1031px;width:296px;height:41px;">
<div class="t" style="left:-8px;top:8.3px;font-size:28px;color:#808080;letter-spacing:0.2px;">e/btn_default_material</div>
</div>
<svg class="a" style="left:2801px;top:1050px;" width="18" height="4" viewBox="0 0 18 4"><circle cx="2" cy="2" r="1.3" fill="#555"/><circle cx="9" cy="2" r="1.3" fill="#555"/><circle cx="16" cy="2" r="1.3" fill="#555"/></svg>
<div class="a" style="left:2468px;top:1086px;width:314px;height:45px;background:#ffffff;border:2px solid #9a9a9a;"></div>
<svg class="a" style="left:2801px;top:1106px;" width="18" height="4" viewBox="0 0 18 4"><circle cx="2" cy="2" r="1.3" fill="#555"/><circle cx="9" cy="2" r="1.3" fill="#555"/><circle cx="16" cy="2" r="1.3" fill="#555"/></svg>
<div class="a" style="left:2465px;top:1143px;width:357px;height:40px;background:#fff;border-radius:5px;box-shadow:0 1px 1.5px rgba(0,0,0,0.35), 0 0 0 0.5px rgba(0,0,0,0.12);"></div>
<div class="a" style="left:2789px;top:1143px;width:33px;height:40px;border-radius:0 5px 5px 0;background:linear-gradient(#5aa8ff,#1a6fe8);"></div>
<svg class="a" style="left:2796px;top:1149px;" width="20" height="28" viewBox="0 0 20 28"><path d="M3 10 L10 3 L17 10 M3 18 L10 25 L17 18" fill="none" stroke="#fff" stroke-width="2.4"/></svg>
<div class="t" style="left:2478px;top:1149.3px;font-size:28px;color:#808080;">center</div>
<div class="a" style="left:2486px;top:1214px;width:88px;height:5px;background:#bdbdbd;border-radius:2px;"></div>
<div class="a" style="left:2471px;top:1201px;width:31px;height:31px;border-radius:50%;background:#fff;box-shadow:0 1px 2px rgba(0,0,0,0.4), 0 0 0 0.5px rgba(0,0,0,0.15);"></div>
<div class="a" style="left:2611px;top:1193px;width:171px;height:47px;background:#ffffff;border:2px solid #9a9a9a;"></div>
<svg class="a" style="left:2801px;top:1215px;" width="18" height="4" viewBox="0 0 18 4"><circle cx="2" cy="2" r="1.3" fill="#555"/><circle cx="9" cy="2" r="1.3" fill="#555"/><circle cx="16" cy="2" r="1.3" fill="#555"/></svg>
<div class="a" style="left:2465px;top:1252px;width:357px;height:40px;background:#fff;border-radius:5px;box-shadow:0 1px 1.5px rgba(0,0,0,0.35), 0 0 0 0.5px rgba(0,0,0,0.12);"></div>
<div class="a" style="left:2789px;top:1252px;width:33px;height:40px;border-radius:0 5px 5px 0;background:linear-gradient(#5aa8ff,#1a6fe8);"></div>
<svg class="a" style="left:2796px;top:1258px;" width="20" height="28" viewBox="0 0 20 28"><path d="M3 10 L10 3 L17 10 M3 18 L10 25 L17 18" fill="none" stroke="#fff" stroke-width="2.4"/></svg>
<div class="t" style="left:2478px;top:1258.3px;font-size:28px;color:#808080;">none</div>
<div class="a" style="left:2478px;top:1304px;width:28px;height:28px;border-radius:6px;background:linear-gradient(#5aa8ff,#1a6fe8);"></div>
<div class="a" style="left:2484px;top:1316px;width:16px;height:4px;background:#ffffff;border-radius:2px;"></div>
<div class="a" style="left:2478px;top:1344px;width:28px;height:28px;border-radius:6px;background:linear-gradient(#5aa8ff,#1a6fe8);"></div>
<div class="a" style="left:2484px;top:1356px;width:16px;height:4px;background:#ffffff;border-radius:2px;"></div>
<div class="a" style="left:2465px;top:1384px;width:357px;height:40px;background:#fff;border-radius:5px;box-shadow:0 1px 1.5px rgba(0,0,0,0.35), 0 0 0 0.5px rgba(0,0,0,0.12);"></div>
<div class="a" style="left:2789px;top:1384px;width:33px;height:40px;border-radius:0 5px 5px 0;background:linear-gradient(#5aa8ff,#1a6fe8);"></div>
<svg class="a" style="left:2796px;top:1390px;" width="20" height="28" viewBox="0 0 20 28"><path d="M3 10 L10 3 L17 10 M3 18 L10 25 L17 18" fill="none" stroke="#fff" stroke-width="2.4"/></svg>
<div class="t" style="left:2478px;top:1390.3px;font-size:28px;color:#808080;">none</div>
<div class="a" style="left:502px;top:1600px;width:2338px;height:4px;background:#c4c4c4;"></div>
<div class="a" style="left:502px;top:1604px;width:2338px;height:6px;background:#ffffff;"></div>
<div class="a" style="left:502px;top:1610px;width:2338px;height:2px;background:#c6c6c6;"></div>
<div class="a" style="left:502px;top:1612px;width:2338px;height:48px;background:#ececec;"></div>
<div class="a" style="left:502px;top:1660px;width:2338px;height:2px;background:#c6c6c6;"></div>
<div class="a" style="left:0px;top:1662px;width:2840px;height:2px;background:#ececec;"></div>
<div class="a" style="left:520px;top:1611px;width:2px;height:49px;background:#c8c8c8;"></div>
<div class="a" style="left:522px;top:1604px;width:100px;height:56px;background:#ffffff;"></div>
<div class="a" style="left:621px;top:1610px;width:105px;height:50px;background:#d4d4d4;border:1.5px solid #c2c2c2;border-bottom:none;"></div>
<div class="t" style="left:542px;top:1620.5px;font-size:23px;color:#1b1b1b;">Design</div>
<div class="t" style="left:655px;top:1618.0px;font-size:26px;color:#444444;">Text</div>
</body></html>
